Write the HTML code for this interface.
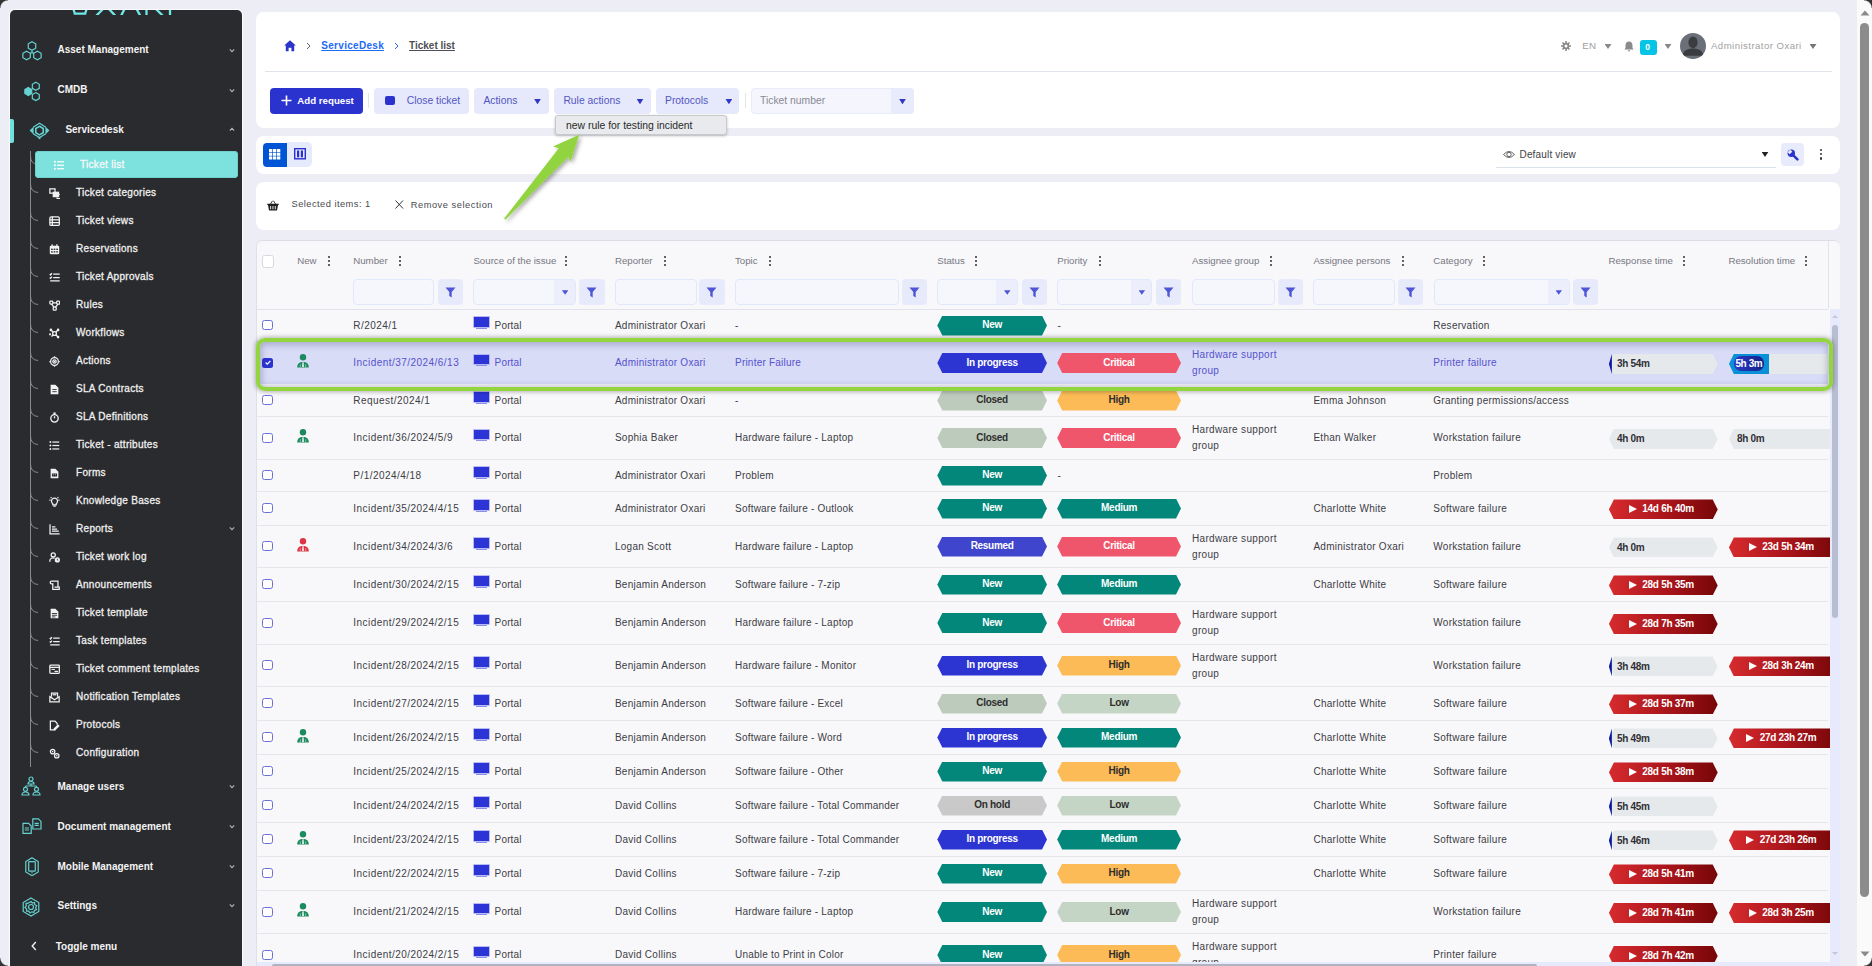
<!DOCTYPE html><html><head><meta charset="utf-8"><style>
*{box-sizing:border-box;margin:0;padding:0}
html,body{width:1872px;height:966px;overflow:hidden;background:#ededf5;font-family:"Liberation Sans", sans-serif;position:relative}
.a{position:absolute}
.t{position:absolute;white-space:nowrap;line-height:1}
</style></head><body><div class="a" style="left:10.0px;top:10.0px;width:232.0px;height:970.0px;background:#2a2b2e;border-radius:5px 5px 0 0;box-shadow:0 0 0 1px #fbfbff"></div>
<svg class="a" style="left:60.0px;top:10.0px;" width="120" height="5" viewBox="0 0 120 5"><g stroke="#6fe8e8" stroke-width="2.3" fill="none">
<path d="M11.5 -8 L14.8 3.7 L25.2 3.7 L28.5 -8"/>
<path d="M35 7 L44 -2"/><path d="M56.5 7 L48 -2"/>
<path d="M60.5 7 L65 -2"/><path d="M81 7 L76 -2"/>
<path d="M86.5 7 V-2"/><path d="M104 7 L95 -2"/><path d="M110 7 V-2"/>
</g></svg>
<svg class="a" style="left:21.0px;top:41.0px;" width="22" height="22" viewBox="0 0 22 22"><g stroke="#64d3d1" stroke-width="1.2" fill="none"><path d="M11.00,0.70 L14.72,2.85 L14.72,7.15 L11.00,9.30 L7.28,7.15 L7.28,2.85 Z"/><path d="M5.60,10.20 L9.32,12.35 L9.32,16.65 L5.60,18.80 L1.88,16.65 L1.88,12.35 Z"/><path d="M16.40,10.20 L20.12,12.35 L20.12,16.65 L16.40,18.80 L12.68,16.65 L12.68,12.35 Z"/><path d="M11 9.3 V11.6 M11 11.6 L9.2 12.3 M11 11.6 L12.8 12.3"/></g></svg>
<svg class="a" style="left:21.0px;top:80.5px;" width="22" height="22" viewBox="0 0 22 22"><g stroke="#64d3d1" stroke-width="1.2" fill="none"><path d="M14.80,1.30 L18.26,3.30 L18.26,7.30 L14.80,9.30 L11.34,7.30 L11.34,3.30 Z"/><path d="M14.80,11.60 L18.26,13.60 L18.26,17.60 L14.80,19.60 L11.34,17.60 L11.34,13.60 Z"/><path d="M7.30,6.50 L10.76,8.50 L10.76,12.50 L7.30,14.50 L3.84,12.50 L3.84,8.50 Z" fill="#64d3d1"/></g></svg>
<svg class="a" style="left:29.0px;top:121.5px;" width="21" height="18" viewBox="0 0 21 18"><g stroke="#64d3d1" stroke-width="1.3" fill="none"><path d="M4.2 5.2 L10.5 1.3 L16.8 5.2"/><path d="M4.2 11.8 L10.5 15.6 L16.8 11.8"/><path d="M10.50,4.30 L14.22,6.45 L14.22,10.75 L10.50,12.90 L6.78,10.75 L6.78,6.45 Z" stroke-width="1.6"/></g><path d="M4.6 4.6 L0.6 8.5 L4.6 12.4 Z" fill="#64d3d1"/><path d="M16.4 4.6 L20.4 8.5 L16.4 12.4 Z" fill="#64d3d1"/><path d="M8 15.3 L10.5 17.3 L13 15.3 L10.5 16 Z" fill="#64d3d1"/></svg>
<div class="a" style="left:10.0px;top:118.5px;width:3.5px;height:24.5px;background:#6fe0dd;border-radius:0 2px 2px 0"></div>
<div class="t" style="left:57.5px;top:45.0px;font-size:10px;color:#f4f4f4;font-weight:bold;">Asset Management</div>
<div class="t" style="left:57.5px;top:85.0px;font-size:10px;color:#f4f4f4;font-weight:bold;">CMDB</div>
<div class="t" style="left:65.4px;top:125.0px;font-size:10px;color:#f4f4f4;font-weight:bold;">Servicedesk</div>
<svg class="a" style="left:229.0px;top:47.5px;" width="6" height="5" viewBox="0 0 6 5"><path d="M0.8 1.4 L3 3.6 L5.2 1.4" stroke="#b4b4b4" stroke-width="1.1" fill="none"/></svg>
<svg class="a" style="left:229.0px;top:87.5px;" width="6" height="5" viewBox="0 0 6 5"><path d="M0.8 1.4 L3 3.6 L5.2 1.4" stroke="#b4b4b4" stroke-width="1.1" fill="none"/></svg>
<svg class="a" style="left:229.0px;top:127.0px;" width="6" height="5" viewBox="0 0 6 5"><path d="M0.8 3.6 L3 1.4 L5.2 3.6" stroke="#b4b4b4" stroke-width="1.1" fill="none"/></svg>
<div class="a" style="left:30.0px;top:151.0px;width:1.0px;height:616.0px;background:#8a8a8a"></div>
<svg class="a" style="left:30.0px;top:155.6px;" width="10" height="10" viewBox="0 0 10 10"><path d="M0.5 0 Q0.5 8 8 8.5" stroke="#8a8a8a" stroke-width="1" fill="none"/></svg>
<div class="a" style="left:35.3px;top:151.2px;width:202.7px;height:27.3px;background:#7de2de;border-radius:4px;box-shadow:inset 0 0 0 1px #70d0cc"></div>
<svg class="a" style="left:53.8px;top:159.8px;" width="10.5" height="10.5" viewBox="0 0 12 12"><g fill="#fff"><rect x="0" y="1" width="2" height="2"/><rect x="0" y="5" width="2" height="2"/><rect x="0" y="9" width="2" height="2"/><rect x="3.5" y="1.3" width="8" height="1.4"/><rect x="3.5" y="5.3" width="8" height="1.4"/><rect x="3.5" y="9.3" width="8" height="1.4"/></g></svg>
<div class="t" style="left:80.0px;top:160.0px;font-size:10px;color:#f8f8f8;letter-spacing:0.3px;-webkit-text-stroke:0.3px #f8f8f8">Ticket list</div>
<svg class="a" style="left:30.0px;top:183.6px;" width="10" height="10" viewBox="0 0 10 10"><path d="M0.5 0 Q0.5 8 8 8.5" stroke="#8a8a8a" stroke-width="1" fill="none"/></svg>
<svg class="a" style="left:48.8px;top:187.7px;" width="11.2" height="11.2" viewBox="-0.4 -0.4 13 13"><g stroke="#f2f2f2" stroke-width="1.45" fill="none"><rect x="0.6" y="0.6" width="6" height="5"/><rect x="4.6" y="4.6" width="6" height="5" fill="#f2f2f2"/><path d="M9 10.5 V12 H13 V7 H11.5"/></g></svg>
<div class="t" style="left:76.0px;top:188.0px;font-size:10px;color:#efefef;letter-spacing:0.3px;-webkit-text-stroke:0.3px #efefef">Ticket categories</div>
<svg class="a" style="left:30.0px;top:211.6px;" width="10" height="10" viewBox="0 0 10 10"><path d="M0.5 0 Q0.5 8 8 8.5" stroke="#8a8a8a" stroke-width="1" fill="none"/></svg>
<svg class="a" style="left:48.8px;top:215.7px;" width="11.2" height="11.2" viewBox="-0.4 -0.4 13 13"><g stroke="#f2f2f2" stroke-width="1.45" fill="none"><rect x="0.6" y="0.6" width="11" height="10" rx="1.5"/><path d="M0.6 4 H11.6 M0.6 7.3 H11.6 M3.5 0.6 V10.6"/></g></svg>
<div class="t" style="left:76.0px;top:216.0px;font-size:10px;color:#efefef;letter-spacing:0.3px;-webkit-text-stroke:0.3px #efefef">Ticket views</div>
<svg class="a" style="left:30.0px;top:239.6px;" width="10" height="10" viewBox="0 0 10 10"><path d="M0.5 0 Q0.5 8 8 8.5" stroke="#8a8a8a" stroke-width="1" fill="none"/></svg>
<svg class="a" style="left:48.8px;top:243.7px;" width="11.2" height="11.2" viewBox="-0.4 -0.4 13 13"><g fill="#f2f2f2"><rect x="0.5" y="1.5" width="11" height="10" rx="1.5"/><rect x="2.5" y="0" width="1.5" height="3"/><rect x="8" y="0" width="1.5" height="3"/></g><g fill="#2a2b2e"><rect x="2" y="5" width="2" height="1.5"/><rect x="5" y="5" width="2" height="1.5"/><rect x="8" y="5" width="2" height="1.5"/><rect x="2" y="8" width="2" height="1.5"/><rect x="5" y="8" width="2" height="1.5"/><rect x="8" y="8" width="2" height="1.5"/></g></svg>
<div class="t" style="left:76.0px;top:244.0px;font-size:10px;color:#efefef;letter-spacing:0.3px;-webkit-text-stroke:0.3px #efefef">Reservations</div>
<svg class="a" style="left:30.0px;top:267.6px;" width="10" height="10" viewBox="0 0 10 10"><path d="M0.5 0 Q0.5 8 8 8.5" stroke="#8a8a8a" stroke-width="1" fill="none"/></svg>
<svg class="a" style="left:48.8px;top:271.7px;" width="11.2" height="11.2" viewBox="-0.4 -0.4 13 13"><g stroke="#f2f2f2" stroke-width="1.45" fill="none"><path d="M0.5 2 L1.5 3 L3 1 M0.5 6 L1.5 7 L3 5"/><path d="M4.5 2.2 H12 M4.5 6.2 H12 M1 10 H12"/></g></svg>
<div class="t" style="left:76.0px;top:272.0px;font-size:10px;color:#efefef;letter-spacing:0.3px;-webkit-text-stroke:0.3px #efefef">Ticket Approvals</div>
<svg class="a" style="left:30.0px;top:295.6px;" width="10" height="10" viewBox="0 0 10 10"><path d="M0.5 0 Q0.5 8 8 8.5" stroke="#8a8a8a" stroke-width="1" fill="none"/></svg>
<svg class="a" style="left:48.8px;top:299.7px;" width="11.2" height="11.2" viewBox="-0.4 -0.4 13 13"><g stroke="#f2f2f2" stroke-width="1.45" fill="none"><rect x="0.6" y="1" width="3.5" height="3.5" rx="1"/><rect x="8.5" y="1" width="3.5" height="3.5" rx="1"/><rect x="4.5" y="8" width="3.5" height="3.5" rx="1"/><path d="M4 2.8 H8.5 M2.5 4.5 L5.5 8 M10 4.5 L7 8"/></g></svg>
<div class="t" style="left:76.0px;top:300.0px;font-size:10px;color:#efefef;letter-spacing:0.3px;-webkit-text-stroke:0.3px #efefef">Rules</div>
<svg class="a" style="left:30.0px;top:323.6px;" width="10" height="10" viewBox="0 0 10 10"><path d="M0.5 0 Q0.5 8 8 8.5" stroke="#8a8a8a" stroke-width="1" fill="none"/></svg>
<svg class="a" style="left:48.8px;top:327.7px;" width="11.2" height="11.2" viewBox="-0.4 -0.4 13 13"><g stroke="#f2f2f2" stroke-width="1.55" fill="none"><circle cx="6" cy="6" r="2.2"/><path d="M4.5 4.5 L2 2 M7.5 4.5 L10 2 M4.5 7.5 L2.5 9.5 M7.5 7.5 L10 10"/></g><g fill="#f2f2f2"><circle cx="1.8" cy="1.8" r="1.5"/><circle cx="10.2" cy="1.8" r="1.5"/><circle cx="10.2" cy="10.2" r="1.5"/><circle cx="0.8" cy="7" r="1.2"/></g></svg>
<div class="t" style="left:76.0px;top:328.0px;font-size:10px;color:#efefef;letter-spacing:0.3px;-webkit-text-stroke:0.3px #efefef">Workflows</div>
<svg class="a" style="left:30.0px;top:351.6px;" width="10" height="10" viewBox="0 0 10 10"><path d="M0.5 0 Q0.5 8 8 8.5" stroke="#8a8a8a" stroke-width="1" fill="none"/></svg>
<svg class="a" style="left:48.8px;top:355.7px;" width="11.2" height="11.2" viewBox="-0.4 -0.4 13 13"><g stroke="#f2f2f2" stroke-width="1.45" fill="none"><circle cx="6" cy="6" r="4.5"/><circle cx="6" cy="6" r="2"/><path d="M6 0 V1.5 M6 10.5 V12 M0 6 H1.5 M10.5 6 H12"/></g><circle cx="6" cy="6" r="1" fill="#f2f2f2"/></svg>
<div class="t" style="left:76.0px;top:356.0px;font-size:10px;color:#efefef;letter-spacing:0.3px;-webkit-text-stroke:0.3px #efefef">Actions</div>
<svg class="a" style="left:30.0px;top:379.6px;" width="10" height="10" viewBox="0 0 10 10"><path d="M0.5 0 Q0.5 8 8 8.5" stroke="#8a8a8a" stroke-width="1" fill="none"/></svg>
<svg class="a" style="left:48.8px;top:383.7px;" width="11.2" height="11.2" viewBox="-0.4 -0.4 13 13"><g fill="#f2f2f2"><path d="M1.5 0.5 H7 L10.5 4 V11.5 H1.5 Z"/></g><g stroke="#2a2b2e" stroke-width="1"><path d="M3.5 6 H8.5 M3.5 8.5 H8.5"/></g></svg>
<div class="t" style="left:76.0px;top:384.0px;font-size:10px;color:#efefef;letter-spacing:0.3px;-webkit-text-stroke:0.3px #efefef">SLA Contracts</div>
<svg class="a" style="left:30.0px;top:407.6px;" width="10" height="10" viewBox="0 0 10 10"><path d="M0.5 0 Q0.5 8 8 8.5" stroke="#8a8a8a" stroke-width="1" fill="none"/></svg>
<svg class="a" style="left:48.8px;top:411.7px;" width="11.2" height="11.2" viewBox="-0.4 -0.4 13 13"><g stroke="#f2f2f2" stroke-width="1.55" fill="none"><circle cx="6" cy="7" r="4.3"/><path d="M6 7 V4.5 M4.5 1 H7.5 M6 1 V2.5"/></g></svg>
<div class="t" style="left:76.0px;top:412.0px;font-size:10px;color:#efefef;letter-spacing:0.3px;-webkit-text-stroke:0.3px #efefef">SLA Definitions</div>
<svg class="a" style="left:30.0px;top:435.6px;" width="10" height="10" viewBox="0 0 10 10"><path d="M0.5 0 Q0.5 8 8 8.5" stroke="#8a8a8a" stroke-width="1" fill="none"/></svg>
<svg class="a" style="left:48.8px;top:439.7px;" width="11.2" height="11.2" viewBox="-0.4 -0.4 13 13"><g fill="#f2f2f2"><circle cx="1.2" cy="2" r="1.1"/><circle cx="1.2" cy="6" r="1.1"/><circle cx="1.2" cy="10" r="1.1"/><rect x="3.5" y="1.3" width="8" height="1.4"/><rect x="3.5" y="5.3" width="8" height="1.4"/><rect x="3.5" y="9.3" width="8" height="1.4"/></g></svg>
<div class="t" style="left:76.0px;top:440.0px;font-size:10px;color:#efefef;letter-spacing:0.3px;-webkit-text-stroke:0.3px #efefef">Ticket - attributes</div>
<svg class="a" style="left:30.0px;top:463.6px;" width="10" height="10" viewBox="0 0 10 10"><path d="M0.5 0 Q0.5 8 8 8.5" stroke="#8a8a8a" stroke-width="1" fill="none"/></svg>
<svg class="a" style="left:48.8px;top:467.7px;" width="11.2" height="11.2" viewBox="-0.4 -0.4 13 13"><g fill="#f2f2f2"><path d="M1.5 0.5 H7 L10.5 4 V11.5 H1.5 Z"/></g><g fill="#2a2b2e"><rect x="3" y="6" width="6" height="3.5"/></g><g fill="#f2f2f2"><rect x="4" y="7" width="1" height="1"/><rect x="6.5" y="7" width="1" height="1"/></g></svg>
<div class="t" style="left:76.0px;top:468.0px;font-size:10px;color:#efefef;letter-spacing:0.3px;-webkit-text-stroke:0.3px #efefef">Forms</div>
<svg class="a" style="left:30.0px;top:491.6px;" width="10" height="10" viewBox="0 0 10 10"><path d="M0.5 0 Q0.5 8 8 8.5" stroke="#8a8a8a" stroke-width="1" fill="none"/></svg>
<svg class="a" style="left:48.8px;top:495.7px;" width="11.2" height="11.2" viewBox="-0.4 -0.4 13 13"><g stroke="#f2f2f2" stroke-width="1.45" fill="none"><path d="M4 8.5 A3.5 3.5 0 1 1 8 8.5 V10 H4 Z"/><path d="M4.5 11.5 H7.5 M0 4.5 H1.5 M10.5 4.5 H12 M1.5 1 L2.5 2 M10.5 1 L9.5 2"/></g></svg>
<div class="t" style="left:76.0px;top:496.0px;font-size:10px;color:#efefef;letter-spacing:0.3px;-webkit-text-stroke:0.3px #efefef">Knowledge Bases</div>
<svg class="a" style="left:30.0px;top:519.6px;" width="10" height="10" viewBox="0 0 10 10"><path d="M0.5 0 Q0.5 8 8 8.5" stroke="#8a8a8a" stroke-width="1" fill="none"/></svg>
<svg class="a" style="left:48.8px;top:523.7px;" width="11.2" height="11.2" viewBox="-0.4 -0.4 13 13"><g stroke="#f2f2f2" stroke-width="1.45" fill="none"><path d="M0.8 0 V11.2 H12"/><path d="M3 3 H7 M3 5.5 H9 M3 8 H11"/></g></svg>
<div class="t" style="left:76.0px;top:524.0px;font-size:10px;color:#efefef;letter-spacing:0.3px;-webkit-text-stroke:0.3px #efefef">Reports</div>
<svg class="a" style="left:30.0px;top:547.6px;" width="10" height="10" viewBox="0 0 10 10"><path d="M0.5 0 Q0.5 8 8 8.5" stroke="#8a8a8a" stroke-width="1" fill="none"/></svg>
<svg class="a" style="left:48.8px;top:551.7px;" width="11.2" height="11.2" viewBox="-0.4 -0.4 13 13"><g stroke="#f2f2f2" stroke-width="1.45" fill="none"><circle cx="4.5" cy="3" r="2.4"/><path d="M0.6 11 V9.5 A3.5 3 0 0 1 6 7"/></g><circle cx="9.3" cy="8.8" r="3" fill="#f2f2f2"/><path d="M9.3 7.3 V9 H10.5" stroke="#2a2b2e" stroke-width="0.8" fill="none"/></svg>
<div class="t" style="left:76.0px;top:552.0px;font-size:10px;color:#efefef;letter-spacing:0.3px;-webkit-text-stroke:0.3px #efefef">Ticket work log</div>
<svg class="a" style="left:30.0px;top:575.6px;" width="10" height="10" viewBox="0 0 10 10"><path d="M0.5 0 Q0.5 8 8 8.5" stroke="#8a8a8a" stroke-width="1" fill="none"/></svg>
<svg class="a" style="left:48.8px;top:579.7px;" width="11.2" height="11.2" viewBox="-0.4 -0.4 13 13"><g stroke="#f2f2f2" stroke-width="1.45" fill="none"><path d="M2.5 1 H10 V8 M2.5 1 A1.5 1.5 0 0 0 2.5 4 H4 V10.5 H11.5 V8 H6"/></g></svg>
<div class="t" style="left:76.0px;top:580.0px;font-size:10px;color:#efefef;letter-spacing:0.3px;-webkit-text-stroke:0.3px #efefef">Announcements</div>
<svg class="a" style="left:30.0px;top:603.6px;" width="10" height="10" viewBox="0 0 10 10"><path d="M0.5 0 Q0.5 8 8 8.5" stroke="#8a8a8a" stroke-width="1" fill="none"/></svg>
<svg class="a" style="left:48.8px;top:607.7px;" width="11.2" height="11.2" viewBox="-0.4 -0.4 13 13"><g fill="#f2f2f2"><path d="M1.5 0.5 H7 L10.5 4 V11.5 H1.5 Z"/></g><g fill="#2a2b2e"><rect x="3" y="5.5" width="6" height="1"/><rect x="3" y="7.5" width="6" height="1"/><rect x="3" y="9.5" width="4" height="1"/></g></svg>
<div class="t" style="left:76.0px;top:608.0px;font-size:10px;color:#efefef;letter-spacing:0.3px;-webkit-text-stroke:0.3px #efefef">Ticket template</div>
<svg class="a" style="left:30.0px;top:631.6px;" width="10" height="10" viewBox="0 0 10 10"><path d="M0.5 0 Q0.5 8 8 8.5" stroke="#8a8a8a" stroke-width="1" fill="none"/></svg>
<svg class="a" style="left:48.8px;top:635.7px;" width="11.2" height="11.2" viewBox="-0.4 -0.4 13 13"><g stroke="#f2f2f2" stroke-width="1.45" fill="none"><path d="M0.5 2 L1.5 3 L3 1 M0.5 6 L1.5 7 L3 5"/><path d="M4.5 2.2 H12 M4.5 6.2 H12 M1 10 H12"/></g></svg>
<div class="t" style="left:76.0px;top:636.0px;font-size:10px;color:#efefef;letter-spacing:0.3px;-webkit-text-stroke:0.3px #efefef">Task templates</div>
<svg class="a" style="left:30.0px;top:659.6px;" width="10" height="10" viewBox="0 0 10 10"><path d="M0.5 0 Q0.5 8 8 8.5" stroke="#8a8a8a" stroke-width="1" fill="none"/></svg>
<svg class="a" style="left:48.8px;top:663.7px;" width="11.2" height="11.2" viewBox="-0.4 -0.4 13 13"><g stroke="#f2f2f2" stroke-width="1.45" fill="none"><rect x="0.6" y="1" width="11" height="9.5" rx="1"/><path d="M0.6 3.5 H11.6"/></g><g fill="#f2f2f2"><rect x="2.5" y="5.3" width="4" height="1.2"/><rect x="6" y="7.5" width="4" height="1.5"/></g></svg>
<div class="t" style="left:76.0px;top:664.0px;font-size:10px;color:#efefef;letter-spacing:0.3px;-webkit-text-stroke:0.3px #efefef">Ticket comment templates</div>
<svg class="a" style="left:30.0px;top:687.6px;" width="10" height="10" viewBox="0 0 10 10"><path d="M0.5 0 Q0.5 8 8 8.5" stroke="#8a8a8a" stroke-width="1" fill="none"/></svg>
<svg class="a" style="left:48.8px;top:691.7px;" width="11.2" height="11.2" viewBox="-0.4 -0.4 13 13"><g stroke="#f2f2f2" stroke-width="1.45" fill="none"><path d="M2.5 5 V0.8 H9.5 V5"/><path d="M0.6 5 L6 8.5 L11.4 5 V11 H0.6 Z"/><path d="M4 2.8 H8"/></g></svg>
<div class="t" style="left:76.0px;top:692.0px;font-size:10px;color:#efefef;letter-spacing:0.3px;-webkit-text-stroke:0.3px #efefef">Notification Templates</div>
<svg class="a" style="left:30.0px;top:715.6px;" width="10" height="10" viewBox="0 0 10 10"><path d="M0.5 0 Q0.5 8 8 8.5" stroke="#8a8a8a" stroke-width="1" fill="none"/></svg>
<svg class="a" style="left:48.8px;top:719.7px;" width="11.2" height="11.2" viewBox="-0.4 -0.4 13 13"><g stroke="#f2f2f2" stroke-width="1.45" fill="none"><path d="M7 11 H1.2 V0.8 H6.5 L9 3.3 V5"/></g><path d="M5 9.5 L10 4.5 L12 6.5 L7 11.5 L5 11.5 Z" fill="#f2f2f2"/></svg>
<div class="t" style="left:76.0px;top:720.0px;font-size:10px;color:#efefef;letter-spacing:0.3px;-webkit-text-stroke:0.3px #efefef">Protocols</div>
<svg class="a" style="left:30.0px;top:743.6px;" width="10" height="10" viewBox="0 0 10 10"><path d="M0.5 0 Q0.5 8 8 8.5" stroke="#8a8a8a" stroke-width="1" fill="none"/></svg>
<svg class="a" style="left:48.8px;top:747.7px;" width="11.2" height="11.2" viewBox="-0.4 -0.4 13 13"><g stroke="#f2f2f2" stroke-width="1.45" fill="none"><circle cx="3.8" cy="3.8" r="2.6"/><circle cx="8.6" cy="8.6" r="2.6"/></g><g fill="#f2f2f2"><circle cx="3.8" cy="3.8" r="0.9"/><circle cx="8.6" cy="8.6" r="0.9"/></g></svg>
<div class="t" style="left:76.0px;top:748.0px;font-size:10px;color:#efefef;letter-spacing:0.3px;-webkit-text-stroke:0.3px #efefef">Configuration</div>
<svg class="a" style="left:229.0px;top:526.0px;" width="6" height="5" viewBox="0 0 6 5"><path d="M0.8 1.4 L3 3.6 L5.2 1.4" stroke="#b4b4b4" stroke-width="1.1" fill="none"/></svg>
<svg class="a" style="left:21.0px;top:776.0px;" width="20" height="20" viewBox="0 0 20 20"><g stroke="#64d3d1" stroke-width="1.2" fill="none"><circle cx="10" cy="3" r="2"/><path d="M7 8 A3 2.5 0 0 1 13 8 Z"/><path d="M10 8 V10 M4.5 10 H15.5 M4.5 10 V11 M15.5 10 V11"/><circle cx="4.5" cy="13.3" r="2"/><path d="M1 19 A3.5 3 0 0 1 8 19 Z"/><circle cx="15.5" cy="13.3" r="2"/><path d="M12 19 A3.5 3 0 0 1 19 19 Z"/></g></svg>
<svg class="a" style="left:21.5px;top:818.0px;" width="20" height="16.5" viewBox="0 0 20 16.5"><g stroke="#64d3d1" stroke-width="1.2" fill="none"><path d="M1 5.4 H6.6 L9.2 8 V15.4 H1 Z"/><path d="M10.8 0.8 H16.4 L19 3.4 V11 H10.8 Z"/><path d="M2.8 10 H7 M2.8 12 H7 M12.6 5.4 H16.8 M12.6 7.4 H16.8"/></g></svg>
<svg class="a" style="left:24.5px;top:856.5px;" width="14" height="19.5" viewBox="0 0 14 19.5"><g stroke="#64d3d1" stroke-width="1.2" fill="none"><path d="M7 0.8 L13.2 4.6 V14.9 L7 18.7 L0.8 14.9 V4.6 Z"/><rect x="3.7" y="4.6" width="6.6" height="9.6" rx="0.8"/></g><circle cx="7" cy="15.8" r="0.7" fill="#64d3d1"/></svg>
<svg class="a" style="left:21.0px;top:896.5px;" width="20" height="20" viewBox="0 0 20 20"><g stroke="#64d3d1" stroke-width="1.2" fill="none"><path d="M10.00,1.00 L17.79,5.50 L17.79,14.50 L10.00,19.00 L2.21,14.50 L2.21,5.50 Z"/><circle cx="10" cy="10" r="2.5"/><path d="M10 4.5 L11.3 6 L13.5 5.5 L13.8 7.7 L15.7 8.8 L14.6 10.7 L15.5 12.6 L13.4 13.4 L12.8 15.5 L10.8 14.8 L9 16 L7.8 14.2 L5.6 14.2 L5.6 12 L4 10.5 L5.3 8.8 L5 6.6 L7.1 6.2 Z"/></g></svg>
<div class="t" style="left:57.5px;top:782.0px;font-size:10px;color:#f4f4f4;font-weight:bold;">Manage users</div>
<svg class="a" style="left:229.0px;top:783.8px;" width="6" height="5" viewBox="0 0 6 5"><path d="M0.8 1.4 L3 3.6 L5.2 1.4" stroke="#b4b4b4" stroke-width="1.1" fill="none"/></svg>
<div class="t" style="left:57.5px;top:822.0px;font-size:10px;color:#f4f4f4;font-weight:bold;">Document management</div>
<svg class="a" style="left:229.0px;top:823.6px;" width="6" height="5" viewBox="0 0 6 5"><path d="M0.8 1.4 L3 3.6 L5.2 1.4" stroke="#b4b4b4" stroke-width="1.1" fill="none"/></svg>
<div class="t" style="left:57.5px;top:862.0px;font-size:10px;color:#f4f4f4;font-weight:bold;">Mobile Management</div>
<svg class="a" style="left:229.0px;top:863.6px;" width="6" height="5" viewBox="0 0 6 5"><path d="M0.8 1.4 L3 3.6 L5.2 1.4" stroke="#b4b4b4" stroke-width="1.1" fill="none"/></svg>
<div class="t" style="left:57.5px;top:901.0px;font-size:10px;color:#f4f4f4;font-weight:bold;">Settings</div>
<svg class="a" style="left:229.0px;top:903.4px;" width="6" height="5" viewBox="0 0 6 5"><path d="M0.8 1.4 L3 3.6 L5.2 1.4" stroke="#b4b4b4" stroke-width="1.1" fill="none"/></svg>
<svg class="a" style="left:31.0px;top:941.0px;" width="6" height="10" viewBox="0 0 6 10"><path d="M4.8 1 L1.2 5 L4.8 9" stroke="#f0f0f0" stroke-width="1.4" fill="none"/></svg>
<div class="t" style="left:55.7px;top:942.0px;font-size:10px;color:#f4f4f4;font-weight:bold;">Toggle menu</div>
<div class="a" style="left:256.0px;top:12.0px;width:1584.0px;height:116.0px;background:#fff;border-radius:8px"></div>
<svg class="a" style="left:283.5px;top:40.0px;" width="12" height="11.5" viewBox="0 0 12 11.5"><path d="M6 0.3 L11.8 5.6 H10.2 V11.3 H7.4 V7.8 H4.6 V11.3 H1.8 V5.6 H0.2 Z" fill="#2b34c9"/></svg>
<svg class="a" style="left:306.0px;top:41.5px;" width="5" height="8" viewBox="0 0 5 8"><path d="M1 1 L4 4 L1 7" stroke="#666" stroke-width="1" fill="none"/></svg>
<div class="t" style="left:321.3px;top:41.0px;font-size:10px;color:#1d6af5;font-weight:bold;letter-spacing:0.29px;text-decoration:underline;text-underline-offset:1px;text-decoration-thickness:1px">ServiceDesk</div>
<svg class="a" style="left:394.0px;top:41.5px;" width="5" height="8" viewBox="0 0 5 8"><path d="M1 1 L4 4 L1 7" stroke="#2f6ad8" stroke-width="1" fill="none"/></svg>
<div class="t" style="left:409.0px;top:41.0px;font-size:10px;color:#4e4e54;font-weight:bold;text-decoration:underline;text-underline-offset:1px;text-decoration-thickness:1px">Ticket list</div>
<div class="a" style="left:265.0px;top:71.0px;width:1567.0px;height:1.0px;background:#dfe3ea"></div>
<svg class="a" style="left:1561.0px;top:41.0px;" width="10" height="10" viewBox="0 0 10 10"><g fill="#8a8a8a"><circle cx="5" cy="5" r="3.3"/></g><circle cx="5" cy="5" r="1.5" fill="#fff"/><g stroke="#8a8a8a" stroke-width="1.6"><path d="M5 0 V10 M0 5 H10 M1.5 1.5 L8.5 8.5 M8.5 1.5 L1.5 8.5"/></g><circle cx="5" cy="5" r="1.5" fill="#fff"/></svg>
<div class="t" style="left:1582.3px;top:41.0px;font-size:9.8px;color:#a0a0a0;letter-spacing:0.2px">EN</div>
<div class="a" style="left:1604.5px;top:44.0px;width:7.0px;height:5.0px;background:#888;clip-path:polygon(0 0,100% 0,50% 100%)"></div>
<svg class="a" style="left:1623.5px;top:40.5px;" width="10" height="11" viewBox="0 0 10 11"><path d="M5 0.5 C2.5 0.5 1.5 2.5 1.5 4.5 V7 L0.3 8.5 H9.7 L8.5 7 V4.5 C8.5 2.5 7.5 0.5 5 0.5 Z M3.8 9.3 A1.2 1.2 0 0 0 6.2 9.3 Z" fill="#8a8a8a"/></svg>
<div class="a" style="left:1640.0px;top:40.0px;width:16.5px;height:14.5px;background:#06c4e6;border-radius:3px"></div>
<div class="t" style="left:1645.3px;top:43.0px;font-size:8.5px;color:#fff;font-weight:bold;">0</div>
<div class="a" style="left:1664.5px;top:44.0px;width:7.0px;height:5.0px;background:#888;clip-path:polygon(0 0,100% 0,50% 100%)"></div>
<svg class="a" style="left:1680.0px;top:33.0px;" width="26" height="26" viewBox="0 0 26 26"><defs><clipPath id="av"><circle cx="13" cy="13" r="13"/></clipPath></defs><circle cx="13" cy="13" r="13" fill="#6b7078"/><g clip-path="url(#av)" fill="#3a3c40"><ellipse cx="13" cy="9.3" rx="4.6" ry="5.9"/><path d="M2.5 22.8 C3 17.8 7.5 15.6 13 15.6 C18.5 15.6 23 17.8 23.5 22.8 Z"/></g></svg>
<div class="t" style="left:1711.0px;top:41.0px;font-size:9.6px;color:#a2a2a2;letter-spacing:0.45px">Administrator Oxari</div>
<div class="a" style="left:1809.5px;top:44.0px;width:7.0px;height:5.0px;background:#777;clip-path:polygon(0 0,100% 0,50% 100%)"></div>
<div class="a" style="left:270.0px;top:88.0px;width:93.0px;height:26.0px;background:#2b33cf;border-radius:4px"></div>
<svg class="a" style="left:280.5px;top:95.0px;" width="11" height="11" viewBox="0 0 11 11"><path d="M5.5 0.5 V10.5 M0.5 5.5 H10.5" stroke="#fff" stroke-width="1.6"/></svg>
<div class="t" style="left:297.3px;top:96.0px;font-size:9.7px;color:#fff;font-weight:bold;">Add request</div>
<div class="a" style="left:368.0px;top:93.0px;width:1.0px;height:15.0px;background:#e2e4ea"></div>
<div class="a" style="left:374.2px;top:88.0px;width:94.6px;height:26.0px;background:#e6e9fb;border-radius:4px"></div>
<div class="t" style="left:406.7px;top:96.0px;font-size:10.35px;color:#5356c2;">Close ticket</div>
<div class="a" style="left:384.8px;top:95.8px;width:9.8px;height:9.2px;background:#2b33cf;border-radius:2px"></div>
<div class="a" style="left:474.0px;top:88.0px;width:74.8px;height:26.0px;background:#e6e9fb;border-radius:4px"></div>
<div class="t" style="left:483.4px;top:96.0px;font-size:10.35px;color:#5356c2;">Actions</div>
<div class="a" style="left:534.0px;top:98.8px;width:7.0px;height:5.4px;background:#2f37c6;clip-path:polygon(0 0,100% 0,50% 100%)"></div>
<div class="a" style="left:554.3px;top:88.0px;width:96.4px;height:26.0px;background:#e6e9fb;border-radius:4px"></div>
<div class="t" style="left:563.4px;top:96.0px;font-size:10.35px;color:#5356c2;">Rule actions</div>
<div class="a" style="left:636.5px;top:98.8px;width:7.0px;height:5.4px;background:#2f37c6;clip-path:polygon(0 0,100% 0,50% 100%)"></div>
<div class="a" style="left:656.4px;top:88.0px;width:83.1px;height:26.0px;background:#e6e9fb;border-radius:4px"></div>
<div class="t" style="left:665.0px;top:96.0px;font-size:10.35px;color:#5356c2;">Protocols</div>
<div class="a" style="left:725.4px;top:98.8px;width:7.0px;height:5.4px;background:#2f37c6;clip-path:polygon(0 0,100% 0,50% 100%)"></div>
<div class="a" style="left:744.5px;top:93.0px;width:1.0px;height:15.0px;background:#e2e4ea"></div>
<div class="a" style="left:751.0px;top:88.0px;width:163.0px;height:26.0px;background:#f4f5fd;border:1px solid #e8ebf8;border-radius:4px"></div>
<div class="a" style="left:891.0px;top:88.0px;width:23.0px;height:26.0px;background:#e8ebfb;border-radius:0 4px 4px 0"></div>
<div class="t" style="left:760.0px;top:96.0px;font-size:10.35px;color:#8a8a92;">Ticket number</div>
<div class="a" style="left:899.0px;top:98.8px;width:7.0px;height:5.4px;background:#2f37c6;clip-path:polygon(0 0,100% 0,50% 100%)"></div>
<div class="a" style="left:256.0px;top:136.0px;width:1584.0px;height:38.0px;background:#fff;border-radius:8px"></div>
<div class="a" style="left:263.0px;top:142.7px;width:24.0px;height:24.1px;background:#0055d4;border-radius:4px 0 0 4px"></div>
<div class="a" style="left:287.0px;top:142.2px;width:25.0px;height:25.3px;background:#e5eafc;border-radius:0 5px 5px 0"></div>
<svg class="a" style="left:269.0px;top:149.0px;" width="12" height="11" viewBox="0 0 12 11"><g fill="#fff"><rect x="0" y="0.0" width="3.3" height="3.1"/><rect x="4" y="0.0" width="3.3" height="3.1"/><rect x="8" y="0.0" width="3.3" height="3.1"/><rect x="0" y="3.7" width="3.3" height="3.1"/><rect x="4" y="3.7" width="3.3" height="3.1"/><rect x="8" y="3.7" width="3.3" height="3.1"/><rect x="0" y="7.4" width="3.3" height="3.1"/><rect x="4" y="7.4" width="3.3" height="3.1"/><rect x="8" y="7.4" width="3.3" height="3.1"/></g></svg>
<svg class="a" style="left:294.0px;top:148.4px;" width="12" height="11.5" viewBox="0 0 12 11.5"><rect x="0.7" y="0.7" width="10.6" height="10.1" stroke="#2a2fd0" stroke-width="1.4" fill="none"/><rect x="3" y="2.5" width="2.2" height="6.8" fill="#2a2fd0"/><rect x="6.8" y="2.5" width="2.2" height="6.8" fill="#2a2fd0"/></svg>
<svg class="a" style="left:1503.0px;top:150.0px;" width="12" height="9" viewBox="0 0 12 9"><g stroke="#555" stroke-width="0.9" fill="none"><path d="M0.5 4.5 Q6 -1.5 11.5 4.5 Q6 10.5 0.5 4.5 Z"/><circle cx="6" cy="4.5" r="2.2"/></g></svg>
<div class="t" style="left:1519.5px;top:150.0px;font-size:10px;color:#3e3e44;letter-spacing:0.17px">Default view</div>
<div class="a" style="left:1495.8px;top:166.5px;width:280.0px;height:1.0px;background:#dbe2ea"></div>
<div class="a" style="left:1761.5px;top:151.8px;width:7.0px;height:5.2px;background:#222;clip-path:polygon(0 0,100% 0,50% 100%)"></div>
<div class="a" style="left:1781.0px;top:143.2px;width:22.7px;height:23.2px;background:#e7ebfc;border-radius:4px"></div>
<svg class="a" style="left:1786.5px;top:148.5px;" width="12" height="12" viewBox="0 0 12 12"><circle cx="4.3" cy="4.3" r="3.7" fill="#2b34c9"/><path d="M4.6 4.6 L10.4 10.4" stroke="#2b34c9" stroke-width="2.5" stroke-linecap="round"/><path d="M0.6 3.2 L3.2 0.6 L5.3 2.7 L2.7 5.3 Z" fill="#e7ebfc"/></svg>
<div class="a" style="left:1820.2px;top:148.6px;width:2.2px;height:2.2px;background:#333;border-radius:50%"></div>
<div class="a" style="left:1820.2px;top:153.0px;width:2.2px;height:2.2px;background:#333;border-radius:50%"></div>
<div class="a" style="left:1820.2px;top:157.4px;width:2.2px;height:2.2px;background:#333;border-radius:50%"></div>
<div class="a" style="left:256.0px;top:181.6px;width:1584.0px;height:48.4px;background:#fff;border-radius:8px"></div>
<svg class="a" style="left:267.3px;top:199.5px;" width="12" height="11" viewBox="0 0 12 11"><path d="M3.5 4 L5.5 0.8 M8.5 4 L6.5 0.8" stroke="#222" stroke-width="0.9" fill="none"/><path d="M0.3 3.8 H11.7 V5 H11 L10 10.5 H2 L1 5 H0.3 Z" fill="#1e1e1e"/><g fill="#fff"><rect x="3.2" y="6" width="0.9" height="3.3"/><rect x="5.5" y="6" width="0.9" height="3.3"/><rect x="7.8" y="6" width="0.9" height="3.3"/></g></svg>
<div class="t" style="left:291.5px;top:200.0px;font-size:9.3px;color:#4a4a50;letter-spacing:0.46px">Selected items: 1</div>
<svg class="a" style="left:395.0px;top:200.0px;" width="8.5" height="9" viewBox="0 0 8.5 9"><path d="M0.5 0.5 L8 8.5 M8 0.5 L0.5 8.5" stroke="#333" stroke-width="1"/></svg>
<div class="t" style="left:410.7px;top:201.0px;font-size:9.3px;color:#4a4a50;letter-spacing:0.53px">Remove selection</div>
<div class="a" style="left:256.0px;top:240.0px;width:1584.0px;height:740.0px;background:#f8f8fb;border-radius:6px 6px 0 0;border-left:1px solid #e0e1e8;border-top:1px solid #dcdde4"></div>
<div class="a" style="left:1828.0px;top:241.0px;width:1.0px;height:68.0px;background:#e2e3ea"></div>
<div class="a" style="left:262.0px;top:255.0px;width:11.5px;height:13.0px;background:#fff;border:1px solid #d8d8e0;border-radius:2.5px"></div>
<div class="t" style="left:297.2px;top:256.0px;font-size:9.7px;color:#77777f;">New</div>
<div class="a" style="left:327.5px;top:255.8px;width:2.1px;height:2.1px;background:#444;border-radius:35%"></div>
<div class="a" style="left:327.5px;top:259.8px;width:2.1px;height:2.1px;background:#444;border-radius:35%"></div>
<div class="a" style="left:327.5px;top:263.7px;width:2.1px;height:2.1px;background:#444;border-radius:35%"></div>
<div class="t" style="left:353.2px;top:256.0px;font-size:9.7px;color:#77777f;">Number</div>
<div class="a" style="left:398.6px;top:255.8px;width:2.1px;height:2.1px;background:#444;border-radius:35%"></div>
<div class="a" style="left:398.6px;top:259.8px;width:2.1px;height:2.1px;background:#444;border-radius:35%"></div>
<div class="a" style="left:398.6px;top:263.7px;width:2.1px;height:2.1px;background:#444;border-radius:35%"></div>
<div class="t" style="left:473.4px;top:256.0px;font-size:9.7px;color:#77777f;">Source of the issue</div>
<div class="a" style="left:565.3px;top:255.8px;width:2.1px;height:2.1px;background:#444;border-radius:35%"></div>
<div class="a" style="left:565.3px;top:259.8px;width:2.1px;height:2.1px;background:#444;border-radius:35%"></div>
<div class="a" style="left:565.3px;top:263.7px;width:2.1px;height:2.1px;background:#444;border-radius:35%"></div>
<div class="t" style="left:614.9px;top:256.0px;font-size:9.7px;color:#77777f;">Reporter</div>
<div class="a" style="left:663.7px;top:255.8px;width:2.1px;height:2.1px;background:#444;border-radius:35%"></div>
<div class="a" style="left:663.7px;top:259.8px;width:2.1px;height:2.1px;background:#444;border-radius:35%"></div>
<div class="a" style="left:663.7px;top:263.7px;width:2.1px;height:2.1px;background:#444;border-radius:35%"></div>
<div class="t" style="left:735.0px;top:256.0px;font-size:9.7px;color:#77777f;">Topic</div>
<div class="a" style="left:768.7px;top:255.8px;width:2.1px;height:2.1px;background:#444;border-radius:35%"></div>
<div class="a" style="left:768.7px;top:259.8px;width:2.1px;height:2.1px;background:#444;border-radius:35%"></div>
<div class="a" style="left:768.7px;top:263.7px;width:2.1px;height:2.1px;background:#444;border-radius:35%"></div>
<div class="t" style="left:937.3px;top:256.0px;font-size:9.7px;color:#77777f;">Status</div>
<div class="a" style="left:974.8px;top:255.8px;width:2.1px;height:2.1px;background:#444;border-radius:35%"></div>
<div class="a" style="left:974.8px;top:259.8px;width:2.1px;height:2.1px;background:#444;border-radius:35%"></div>
<div class="a" style="left:974.8px;top:263.7px;width:2.1px;height:2.1px;background:#444;border-radius:35%"></div>
<div class="t" style="left:1057.2px;top:256.0px;font-size:9.7px;color:#77777f;">Priority</div>
<div class="a" style="left:1098.7px;top:255.8px;width:2.1px;height:2.1px;background:#444;border-radius:35%"></div>
<div class="a" style="left:1098.7px;top:259.8px;width:2.1px;height:2.1px;background:#444;border-radius:35%"></div>
<div class="a" style="left:1098.7px;top:263.7px;width:2.1px;height:2.1px;background:#444;border-radius:35%"></div>
<div class="t" style="left:1192.0px;top:256.0px;font-size:9.7px;color:#77777f;">Assignee group</div>
<div class="a" style="left:1269.7px;top:255.8px;width:2.1px;height:2.1px;background:#444;border-radius:35%"></div>
<div class="a" style="left:1269.7px;top:259.8px;width:2.1px;height:2.1px;background:#444;border-radius:35%"></div>
<div class="a" style="left:1269.7px;top:263.7px;width:2.1px;height:2.1px;background:#444;border-radius:35%"></div>
<div class="t" style="left:1313.4px;top:256.0px;font-size:9.7px;color:#77777f;">Assignee persons</div>
<div class="a" style="left:1401.7px;top:255.8px;width:2.1px;height:2.1px;background:#444;border-radius:35%"></div>
<div class="a" style="left:1401.7px;top:259.8px;width:2.1px;height:2.1px;background:#444;border-radius:35%"></div>
<div class="a" style="left:1401.7px;top:263.7px;width:2.1px;height:2.1px;background:#444;border-radius:35%"></div>
<div class="t" style="left:1433.3px;top:256.0px;font-size:9.7px;color:#77777f;">Category</div>
<div class="a" style="left:1483.4px;top:255.8px;width:2.1px;height:2.1px;background:#444;border-radius:35%"></div>
<div class="a" style="left:1483.4px;top:259.8px;width:2.1px;height:2.1px;background:#444;border-radius:35%"></div>
<div class="a" style="left:1483.4px;top:263.7px;width:2.1px;height:2.1px;background:#444;border-radius:35%"></div>
<div class="t" style="left:1608.4px;top:256.0px;font-size:9.7px;color:#77777f;">Response time</div>
<div class="a" style="left:1683.0px;top:255.8px;width:2.1px;height:2.1px;background:#444;border-radius:35%"></div>
<div class="a" style="left:1683.0px;top:259.8px;width:2.1px;height:2.1px;background:#444;border-radius:35%"></div>
<div class="a" style="left:1683.0px;top:263.7px;width:2.1px;height:2.1px;background:#444;border-radius:35%"></div>
<div class="t" style="left:1728.4px;top:256.0px;font-size:9.7px;color:#77777f;">Resolution time</div>
<div class="a" style="left:1804.5px;top:255.8px;width:2.1px;height:2.1px;background:#444;border-radius:35%"></div>
<div class="a" style="left:1804.5px;top:259.8px;width:2.1px;height:2.1px;background:#444;border-radius:35%"></div>
<div class="a" style="left:1804.5px;top:263.7px;width:2.1px;height:2.1px;background:#444;border-radius:35%"></div>
<div class="a" style="left:353.2px;top:279.0px;width:81.1px;height:26.0px;background:#f6f7fc;border:1px solid #e2e8fb;border-radius:4px"></div>
<div class="a" style="left:438.0px;top:279.0px;width:24.7px;height:26.0px;background:#e7eafb;border-radius:4px"></div>
<svg class="a" style="left:444.9px;top:286.5px;" width="11" height="11" viewBox="0 0 11 11"><path d="M0.5 0.5 H10.5 L6.7 5 V10.5 L4.3 9 V5 Z" fill="#4f56d6"/></svg>
<div class="a" style="left:473.4px;top:279.0px;width:102.8px;height:26.0px;background:#f6f7fc;border:1px solid #e2e8fb;border-radius:4px"></div>
<div class="a" style="left:554.0px;top:280.0px;width:21.2px;height:24.0px;background:#eceefb;border-radius:0 3px 3px 0"></div>
<div class="a" style="left:561.9px;top:290.3px;width:6.5px;height:4.5px;background:#4f56d6;clip-path:polygon(0 0,100% 0,50% 100%)"></div>
<div class="a" style="left:579.0px;top:279.0px;width:25.6px;height:26.0px;background:#e7eafb;border-radius:4px"></div>
<svg class="a" style="left:586.3px;top:286.5px;" width="11" height="11" viewBox="0 0 11 11"><path d="M0.5 0.5 H10.5 L6.7 5 V10.5 L4.3 9 V5 Z" fill="#4f56d6"/></svg>
<div class="a" style="left:615.0px;top:279.0px;width:81.7px;height:26.0px;background:#f6f7fc;border:1px solid #e2e8fb;border-radius:4px"></div>
<div class="a" style="left:699.0px;top:279.0px;width:25.7px;height:26.0px;background:#e7eafb;border-radius:4px"></div>
<svg class="a" style="left:706.4px;top:286.5px;" width="11" height="11" viewBox="0 0 11 11"><path d="M0.5 0.5 H10.5 L6.7 5 V10.5 L4.3 9 V5 Z" fill="#4f56d6"/></svg>
<div class="a" style="left:735.0px;top:279.0px;width:163.7px;height:26.0px;background:#f6f7fc;border:1px solid #e2e8fb;border-radius:4px"></div>
<div class="a" style="left:902.4px;top:279.0px;width:24.3px;height:26.0px;background:#e7eafb;border-radius:4px"></div>
<svg class="a" style="left:909.0px;top:286.5px;" width="11" height="11" viewBox="0 0 11 11"><path d="M0.5 0.5 H10.5 L6.7 5 V10.5 L4.3 9 V5 Z" fill="#4f56d6"/></svg>
<div class="a" style="left:937.3px;top:279.0px;width:81.2px;height:26.0px;background:#f6f7fc;border:1px solid #e2e8fb;border-radius:4px"></div>
<div class="a" style="left:995.9px;top:280.0px;width:21.6px;height:24.0px;background:#eceefb;border-radius:0 3px 3px 0"></div>
<div class="a" style="left:1004.0px;top:290.3px;width:6.5px;height:4.5px;background:#4f56d6;clip-path:polygon(0 0,100% 0,50% 100%)"></div>
<div class="a" style="left:1022.0px;top:279.0px;width:25.0px;height:26.0px;background:#e7eafb;border-radius:4px"></div>
<svg class="a" style="left:1029.0px;top:286.5px;" width="11" height="11" viewBox="0 0 11 11"><path d="M0.5 0.5 H10.5 L6.7 5 V10.5 L4.3 9 V5 Z" fill="#4f56d6"/></svg>
<div class="a" style="left:1057.2px;top:279.0px;width:95.1px;height:26.0px;background:#f6f7fc;border:1px solid #e2e8fb;border-radius:4px"></div>
<div class="a" style="left:1131.3px;top:280.0px;width:20.0px;height:24.0px;background:#eceefb;border-radius:0 3px 3px 0"></div>
<div class="a" style="left:1138.6px;top:290.3px;width:6.5px;height:4.5px;background:#4f56d6;clip-path:polygon(0 0,100% 0,50% 100%)"></div>
<div class="a" style="left:1156.0px;top:279.0px;width:24.8px;height:26.0px;background:#e7eafb;border-radius:4px"></div>
<svg class="a" style="left:1162.9px;top:286.5px;" width="11" height="11" viewBox="0 0 11 11"><path d="M0.5 0.5 H10.5 L6.7 5 V10.5 L4.3 9 V5 Z" fill="#4f56d6"/></svg>
<div class="a" style="left:1192.0px;top:279.0px;width:82.7px;height:26.0px;background:#f6f7fc;border:1px solid #e2e8fb;border-radius:4px"></div>
<div class="a" style="left:1278.0px;top:279.0px;width:24.9px;height:26.0px;background:#e7eafb;border-radius:4px"></div>
<svg class="a" style="left:1285.0px;top:286.5px;" width="11" height="11" viewBox="0 0 11 11"><path d="M0.5 0.5 H10.5 L6.7 5 V10.5 L4.3 9 V5 Z" fill="#4f56d6"/></svg>
<div class="a" style="left:1313.4px;top:279.0px;width:81.2px;height:26.0px;background:#f6f7fc;border:1px solid #e2e8fb;border-radius:4px"></div>
<div class="a" style="left:1398.0px;top:279.0px;width:24.5px;height:26.0px;background:#e7eafb;border-radius:4px"></div>
<svg class="a" style="left:1404.8px;top:286.5px;" width="11" height="11" viewBox="0 0 11 11"><path d="M0.5 0.5 H10.5 L6.7 5 V10.5 L4.3 9 V5 Z" fill="#4f56d6"/></svg>
<div class="a" style="left:1433.5px;top:279.0px;width:136.0px;height:26.0px;background:#f6f7fc;border:1px solid #e2e8fb;border-radius:4px"></div>
<div class="a" style="left:1548.0px;top:280.0px;width:20.5px;height:24.0px;background:#eceefb;border-radius:0 3px 3px 0"></div>
<div class="a" style="left:1555.5px;top:290.3px;width:6.5px;height:4.5px;background:#4f56d6;clip-path:polygon(0 0,100% 0,50% 100%)"></div>
<div class="a" style="left:1573.0px;top:279.0px;width:24.8px;height:26.0px;background:#e7eafb;border-radius:4px"></div>
<svg class="a" style="left:1579.9px;top:286.5px;" width="11" height="11" viewBox="0 0 11 11"><path d="M0.5 0.5 H10.5 L6.7 5 V10.5 L4.3 9 V5 Z" fill="#4f56d6"/></svg>
<div class="a" style="left:257.0px;top:309.0px;width:1571.0px;height:1.0px;background:#e2e3ea"></div>
<div class="a" style="left:257.0px;top:341.0px;width:1571.0px;height:1.0px;background:#e5e5ec"></div>
<div class="a" style="left:262.2px;top:320.0px;width:10.8px;height:10.4px;background:#fff;border:1.3px solid #6a70d8;border-radius:2.5px"></div>
<div class="t" style="left:353.3px;top:321.0px;font-size:10px;color:#3d3d44;letter-spacing:0.46px">R/2024/1</div>
<div class="a" style="left:474.3px;top:317.0px;width:14.6px;height:9.6px;background:#2d34d6;box-shadow:0 0 0 0.8px #a8acf0"></div>
<div class="a" style="left:476.3px;top:327.7px;width:10.6px;height:1.3px;background:#8d92e8"></div>
<div class="t" style="left:494.6px;top:321.0px;font-size:10px;color:#3d3d44;letter-spacing:0.15px">Portal</div>
<div class="t" style="left:614.9px;top:321.0px;font-size:10px;color:#3d3d44;letter-spacing:0.27px">Administrator Oxari</div>
<div class="t" style="left:735.0px;top:321.0px;font-size:10px;color:#3d3d44;letter-spacing:0.215px">-</div>
<div class="a" style="left:937.3px;top:315.6px;width:109.7px;height:20px;background:#03877a;clip-path:polygon(5px 0,calc(100% - 5px) 0,100% 50%,calc(100% - 5px) 100%,5px 100%,0 50%)"></div>
<div class="t" style="left:937.3px;top:320.4px;width:109.7px;text-align:center;font-size:10px;letter-spacing:-0.3px;font-weight:bold;color:#fff">New</div>
<div class="t" style="left:1057.5px;top:321.0px;font-size:10px;color:#3d3d44;">-</div>
<div class="t" style="left:1433.3px;top:321.0px;font-size:10px;color:#3d3d44;letter-spacing:0.27px">Reservation</div>
<div class="a" style="left:257.0px;top:341.0px;width:1571.0px;height:43.0px;background:#d9dcf7"></div>
<div class="a" style="left:262.0px;top:357.5px;width:11.0px;height:10.0px;background:#2b33cf;border-radius:2.5px"></div>
<svg class="a" style="left:264.5px;top:360.0px;" width="6" height="5" viewBox="0 0 6 5"><path d="M0.6 2.5 L2.3 4.1 L5.4 0.8" stroke="#fff" stroke-width="1.2" fill="none"/></svg>
<svg class="a" style="left:297.0px;top:354.0px;" width="12" height="14" viewBox="0 0 12 14"><circle cx="6" cy="3.2" r="3.2" fill="#1b8a5e"/><path d="M0.2 13.5 C0.3 9.6 2.3 7.9 6 7.9 C9.7 7.9 11.7 9.6 11.8 13.5 Z" fill="#1b8a5e"/><path d="M5.3 8.3 H6.7 L7 13 H5 Z" fill="#f8f8fb" opacity="0.85"/><path d="M3.3 10.2 V13.2 M8.7 10.2 V13.2" stroke="#f8f8fb" stroke-width="0.6" opacity="0.8"/></svg>
<div class="t" style="left:353.3px;top:358.0px;font-size:10px;color:#5552cc;letter-spacing:0.46px">Incident/37/2024/6/13</div>
<div class="a" style="left:474.3px;top:354.5px;width:14.6px;height:9.6px;background:#2d34d6;box-shadow:0 0 0 0.8px #a8acf0"></div>
<div class="a" style="left:476.3px;top:365.2px;width:10.6px;height:1.3px;background:#8d92e8"></div>
<div class="t" style="left:494.6px;top:358.0px;font-size:10px;color:#5552cc;letter-spacing:0.15px">Portal</div>
<div class="t" style="left:614.9px;top:358.0px;font-size:10px;color:#5552cc;letter-spacing:0.27px">Administrator Oxari</div>
<div class="t" style="left:735.0px;top:358.0px;font-size:10px;color:#5552cc;letter-spacing:0.215px">Printer Failure</div>
<div class="a" style="left:937.3px;top:353.1px;width:109.7px;height:20px;background:#2c34d1;clip-path:polygon(5px 0,calc(100% - 5px) 0,100% 50%,calc(100% - 5px) 100%,5px 100%,0 50%)"></div>
<div class="t" style="left:937.3px;top:357.9px;width:109.7px;text-align:center;font-size:10px;letter-spacing:-0.3px;font-weight:bold;color:#fff">In progress</div>
<div class="a" style="left:1057.2px;top:353.1px;width:123.8px;height:20px;background:#f0566b;clip-path:polygon(5px 0,calc(100% - 5px) 0,100% 50%,calc(100% - 5px) 100%,5px 100%,0 50%)"></div>
<div class="t" style="left:1057.2px;top:357.9px;width:123.8px;text-align:center;font-size:10px;letter-spacing:-0.3px;font-weight:bold;color:#fff">Critical</div>
<div class="t" style="left:1192.0px;top:350.0px;font-size:10px;color:#5552cc;letter-spacing:0.33px">Hardware support</div>
<div class="t" style="left:1192.0px;top:366.0px;font-size:10px;color:#5552cc;letter-spacing:0.33px">group</div>
<div class="t" style="left:1433.3px;top:358.0px;font-size:10px;color:#5552cc;letter-spacing:0.27px">Printer failure</div>
<div class="a" style="left:1608.9px;top:353.9px;width:108.8px;height:20px;overflow:hidden"><div style="width:108.8px;height:20px;background:#e6e9ec;clip-path:polygon(5px 0,calc(100% - 5px) 0,100% 50%,calc(100% - 5px) 100%,5px 100%,0 50%)"></div></div>
<div class="a" style="left:1608.9px;top:353.9px;width:3px;height:20px;background:#0d1a9e;clip-path:polygon(100% 0,100% 100%,0 50%)"></div>
<div class="t" style="left:1616.9px;top:359.0px;font-size:10px;color:#303036;font-weight:bold;letter-spacing:-0.3px">3h 54m</div>
<div class="a" style="left:1728.9px;top:353.9px;width:101.1px;height:20px;overflow:hidden"><div style="width:160px;height:20px;background:linear-gradient(90deg,#0a90d6 0,#0a90d6 40px,#e6e9ec 40px);clip-path:polygon(5px 0,100% 0,100% 100%,5px 100%,0 50%)"></div></div>
<div class="a" style="left:1733.6px;top:356.1px;width:30.7px;height:14.7px;background:linear-gradient(90deg,#2a3bc4,#13208a);border-radius:7px"></div>
<div class="t" style="left:1735.4px;top:359.0px;font-size:10px;color:#fff;font-weight:bold;letter-spacing:-0.4px">5h 3m</div>
<div class="a" style="left:257.0px;top:416.0px;width:1571.0px;height:1.0px;background:#e5e5ec"></div>
<div class="a" style="left:262.2px;top:395.0px;width:10.8px;height:10.4px;background:#fff;border:1.3px solid #6a70d8;border-radius:2.5px"></div>
<div class="t" style="left:353.3px;top:396.0px;font-size:10px;color:#3d3d44;letter-spacing:0.46px">Request/2024/1</div>
<div class="a" style="left:474.3px;top:392.0px;width:14.6px;height:9.6px;background:#2d34d6;box-shadow:0 0 0 0.8px #a8acf0"></div>
<div class="a" style="left:476.3px;top:402.7px;width:10.6px;height:1.3px;background:#8d92e8"></div>
<div class="t" style="left:494.6px;top:396.0px;font-size:10px;color:#3d3d44;letter-spacing:0.15px">Portal</div>
<div class="t" style="left:614.9px;top:396.0px;font-size:10px;color:#3d3d44;letter-spacing:0.27px">Administrator Oxari</div>
<div class="t" style="left:735.0px;top:396.0px;font-size:10px;color:#3d3d44;letter-spacing:0.215px">-</div>
<div class="a" style="left:937.3px;top:390.6px;width:109.7px;height:20px;background:#bdcbbd;clip-path:polygon(5px 0,calc(100% - 5px) 0,100% 50%,calc(100% - 5px) 100%,5px 100%,0 50%)"></div>
<div class="t" style="left:937.3px;top:395.4px;width:109.7px;text-align:center;font-size:10px;letter-spacing:-0.3px;font-weight:bold;color:#2e2e2e">Closed</div>
<div class="a" style="left:1057.2px;top:390.6px;width:123.8px;height:20px;background:#fcbb57;clip-path:polygon(5px 0,calc(100% - 5px) 0,100% 50%,calc(100% - 5px) 100%,5px 100%,0 50%)"></div>
<div class="t" style="left:1057.2px;top:395.4px;width:123.8px;text-align:center;font-size:10px;letter-spacing:-0.3px;font-weight:bold;color:#2e2e2e">High</div>
<div class="t" style="left:1313.4px;top:396.0px;font-size:10px;color:#3d3d44;letter-spacing:0.27px">Emma Johnson</div>
<div class="t" style="left:1433.3px;top:396.0px;font-size:10px;color:#3d3d44;letter-spacing:0.27px">Granting permissions/access</div>
<div class="a" style="left:257.0px;top:459.0px;width:1571.0px;height:1.0px;background:#e5e5ec"></div>
<div class="a" style="left:262.2px;top:432.5px;width:10.8px;height:10.4px;background:#fff;border:1.3px solid #6a70d8;border-radius:2.5px"></div>
<svg class="a" style="left:297.0px;top:429.0px;" width="12" height="14" viewBox="0 0 12 14"><circle cx="6" cy="3.2" r="3.2" fill="#1b8a5e"/><path d="M0.2 13.5 C0.3 9.6 2.3 7.9 6 7.9 C9.7 7.9 11.7 9.6 11.8 13.5 Z" fill="#1b8a5e"/><path d="M5.3 8.3 H6.7 L7 13 H5 Z" fill="#f8f8fb" opacity="0.85"/><path d="M3.3 10.2 V13.2 M8.7 10.2 V13.2" stroke="#f8f8fb" stroke-width="0.6" opacity="0.8"/></svg>
<div class="t" style="left:353.3px;top:433.0px;font-size:10px;color:#3d3d44;letter-spacing:0.46px">Incident/36/2024/5/9</div>
<div class="a" style="left:474.3px;top:429.5px;width:14.6px;height:9.6px;background:#2d34d6;box-shadow:0 0 0 0.8px #a8acf0"></div>
<div class="a" style="left:476.3px;top:440.2px;width:10.6px;height:1.3px;background:#8d92e8"></div>
<div class="t" style="left:494.6px;top:433.0px;font-size:10px;color:#3d3d44;letter-spacing:0.15px">Portal</div>
<div class="t" style="left:614.9px;top:433.0px;font-size:10px;color:#3d3d44;letter-spacing:0.27px">Sophia Baker</div>
<div class="t" style="left:735.0px;top:433.0px;font-size:10px;color:#3d3d44;letter-spacing:0.215px">Hardware failure - Laptop</div>
<div class="a" style="left:937.3px;top:428.1px;width:109.7px;height:20px;background:#bdcbbd;clip-path:polygon(5px 0,calc(100% - 5px) 0,100% 50%,calc(100% - 5px) 100%,5px 100%,0 50%)"></div>
<div class="t" style="left:937.3px;top:432.9px;width:109.7px;text-align:center;font-size:10px;letter-spacing:-0.3px;font-weight:bold;color:#2e2e2e">Closed</div>
<div class="a" style="left:1057.2px;top:428.1px;width:123.8px;height:20px;background:#f0566b;clip-path:polygon(5px 0,calc(100% - 5px) 0,100% 50%,calc(100% - 5px) 100%,5px 100%,0 50%)"></div>
<div class="t" style="left:1057.2px;top:432.9px;width:123.8px;text-align:center;font-size:10px;letter-spacing:-0.3px;font-weight:bold;color:#fff">Critical</div>
<div class="t" style="left:1192.0px;top:425.0px;font-size:10px;color:#3d3d44;letter-spacing:0.33px">Hardware support</div>
<div class="t" style="left:1192.0px;top:441.0px;font-size:10px;color:#3d3d44;letter-spacing:0.33px">group</div>
<div class="t" style="left:1313.4px;top:433.0px;font-size:10px;color:#3d3d44;letter-spacing:0.27px">Ethan Walker</div>
<div class="t" style="left:1433.3px;top:433.0px;font-size:10px;color:#3d3d44;letter-spacing:0.27px">Workstation failure</div>
<div class="a" style="left:1608.9px;top:428.9px;width:108.8px;height:20px;overflow:hidden"><div style="width:108.8px;height:20px;background:#e6e9ec;clip-path:polygon(5px 0,calc(100% - 5px) 0,100% 50%,calc(100% - 5px) 100%,5px 100%,0 50%)"></div></div>
<div class="t" style="left:1616.9px;top:434.0px;font-size:10px;color:#303036;font-weight:bold;letter-spacing:-0.3px">4h 0m</div>
<div class="a" style="left:1728.9px;top:428.9px;width:101.1px;height:20px;overflow:hidden"><div style="width:108.8px;height:20px;background:#e6e9ec;clip-path:polygon(5px 0,calc(100% - 5px) 0,100% 50%,calc(100% - 5px) 100%,5px 100%,0 50%)"></div></div>
<div class="t" style="left:1736.9px;top:434.0px;font-size:10px;color:#303036;font-weight:bold;letter-spacing:-0.3px">8h 0m</div>
<div class="a" style="left:257.0px;top:491.0px;width:1571.0px;height:1.0px;background:#e5e5ec"></div>
<div class="a" style="left:262.2px;top:470.0px;width:10.8px;height:10.4px;background:#fff;border:1.3px solid #6a70d8;border-radius:2.5px"></div>
<div class="t" style="left:353.3px;top:471.0px;font-size:10px;color:#3d3d44;letter-spacing:0.46px">P/1/2024/4/18</div>
<div class="a" style="left:474.3px;top:467.0px;width:14.6px;height:9.6px;background:#2d34d6;box-shadow:0 0 0 0.8px #a8acf0"></div>
<div class="a" style="left:476.3px;top:477.7px;width:10.6px;height:1.3px;background:#8d92e8"></div>
<div class="t" style="left:494.6px;top:471.0px;font-size:10px;color:#3d3d44;letter-spacing:0.15px">Portal</div>
<div class="t" style="left:614.9px;top:471.0px;font-size:10px;color:#3d3d44;letter-spacing:0.27px">Administrator Oxari</div>
<div class="t" style="left:735.0px;top:471.0px;font-size:10px;color:#3d3d44;letter-spacing:0.215px">Problem</div>
<div class="a" style="left:937.3px;top:465.6px;width:109.7px;height:20px;background:#03877a;clip-path:polygon(5px 0,calc(100% - 5px) 0,100% 50%,calc(100% - 5px) 100%,5px 100%,0 50%)"></div>
<div class="t" style="left:937.3px;top:470.4px;width:109.7px;text-align:center;font-size:10px;letter-spacing:-0.3px;font-weight:bold;color:#fff">New</div>
<div class="t" style="left:1057.5px;top:471.0px;font-size:10px;color:#3d3d44;">-</div>
<div class="t" style="left:1433.3px;top:471.0px;font-size:10px;color:#3d3d44;letter-spacing:0.27px">Problem</div>
<div class="a" style="left:257.0px;top:525.0px;width:1571.0px;height:1.0px;background:#e5e5ec"></div>
<div class="a" style="left:262.2px;top:503.0px;width:10.8px;height:10.4px;background:#fff;border:1.3px solid #6a70d8;border-radius:2.5px"></div>
<div class="t" style="left:353.3px;top:504.0px;font-size:10px;color:#3d3d44;letter-spacing:0.46px">Incident/35/2024/4/15</div>
<div class="a" style="left:474.3px;top:500.0px;width:14.6px;height:9.6px;background:#2d34d6;box-shadow:0 0 0 0.8px #a8acf0"></div>
<div class="a" style="left:476.3px;top:510.7px;width:10.6px;height:1.3px;background:#8d92e8"></div>
<div class="t" style="left:494.6px;top:504.0px;font-size:10px;color:#3d3d44;letter-spacing:0.15px">Portal</div>
<div class="t" style="left:614.9px;top:504.0px;font-size:10px;color:#3d3d44;letter-spacing:0.27px">Administrator Oxari</div>
<div class="t" style="left:735.0px;top:504.0px;font-size:10px;color:#3d3d44;letter-spacing:0.215px">Software failure - Outlook</div>
<div class="a" style="left:937.3px;top:498.6px;width:109.7px;height:20px;background:#03877a;clip-path:polygon(5px 0,calc(100% - 5px) 0,100% 50%,calc(100% - 5px) 100%,5px 100%,0 50%)"></div>
<div class="t" style="left:937.3px;top:503.4px;width:109.7px;text-align:center;font-size:10px;letter-spacing:-0.3px;font-weight:bold;color:#fff">New</div>
<div class="a" style="left:1057.2px;top:498.6px;width:123.8px;height:20px;background:#03877a;clip-path:polygon(5px 0,calc(100% - 5px) 0,100% 50%,calc(100% - 5px) 100%,5px 100%,0 50%)"></div>
<div class="t" style="left:1057.2px;top:503.4px;width:123.8px;text-align:center;font-size:10px;letter-spacing:-0.3px;font-weight:bold;color:#fff">Medium</div>
<div class="t" style="left:1313.4px;top:504.0px;font-size:10px;color:#3d3d44;letter-spacing:0.27px">Charlotte White</div>
<div class="t" style="left:1433.3px;top:504.0px;font-size:10px;color:#3d3d44;letter-spacing:0.27px">Software failure</div>
<div class="a" style="left:1608.9px;top:499.4px;width:108.8px;height:20px;overflow:hidden"><div style="width:108.8px;height:20px;background:linear-gradient(90deg,#d62b2e 0%,#a8141a 55%,#760608 100%);clip-path:polygon(5px 0,calc(100% - 5px) 0,100% 50%,calc(100% - 5px) 100%,5px 100%,0 50%)"></div></div>
<div class="t" style="left:1606.9px;top:504.2px;width:108.8px;text-align:center;font-size:10px;letter-spacing:-0.3px;font-weight:bold;color:#fff"><span style="display:inline-block;width:0;height:0;border-left:8.4px solid #fff;border-top:4.8px solid transparent;border-bottom:4.8px solid transparent;margin-right:5.6px;vertical-align:-1.2px"></span>14d 6h 40m</div>
<div class="a" style="left:257.0px;top:567.0px;width:1571.0px;height:1.0px;background:#e5e5ec"></div>
<div class="a" style="left:262.2px;top:541.0px;width:10.8px;height:10.4px;background:#fff;border:1.3px solid #6a70d8;border-radius:2.5px"></div>
<svg class="a" style="left:297.0px;top:537.5px;" width="12" height="14" viewBox="0 0 12 14"><circle cx="6" cy="3.2" r="3.2" fill="#dc3545"/><path d="M0.2 13.5 C0.3 9.6 2.3 7.9 6 7.9 C9.7 7.9 11.7 9.6 11.8 13.5 Z" fill="#dc3545"/><path d="M5.3 8.3 H6.7 L7 13 H5 Z" fill="#f8f8fb" opacity="0.85"/><path d="M3.3 10.2 V13.2 M8.7 10.2 V13.2" stroke="#f8f8fb" stroke-width="0.6" opacity="0.8"/></svg>
<div class="t" style="left:353.3px;top:542.0px;font-size:10px;color:#3d3d44;letter-spacing:0.46px">Incident/34/2024/3/6</div>
<div class="a" style="left:474.3px;top:538.0px;width:14.6px;height:9.6px;background:#2d34d6;box-shadow:0 0 0 0.8px #a8acf0"></div>
<div class="a" style="left:476.3px;top:548.7px;width:10.6px;height:1.3px;background:#8d92e8"></div>
<div class="t" style="left:494.6px;top:542.0px;font-size:10px;color:#3d3d44;letter-spacing:0.15px">Portal</div>
<div class="t" style="left:614.9px;top:542.0px;font-size:10px;color:#3d3d44;letter-spacing:0.27px">Logan Scott</div>
<div class="t" style="left:735.0px;top:542.0px;font-size:10px;color:#3d3d44;letter-spacing:0.215px">Hardware failure - Laptop</div>
<div class="a" style="left:937.3px;top:536.6px;width:109.7px;height:20px;background:#3f45cc;clip-path:polygon(5px 0,calc(100% - 5px) 0,100% 50%,calc(100% - 5px) 100%,5px 100%,0 50%)"></div>
<div class="t" style="left:937.3px;top:541.4px;width:109.7px;text-align:center;font-size:10px;letter-spacing:-0.3px;font-weight:bold;color:#fff">Resumed</div>
<div class="a" style="left:1057.2px;top:536.6px;width:123.8px;height:20px;background:#f0566b;clip-path:polygon(5px 0,calc(100% - 5px) 0,100% 50%,calc(100% - 5px) 100%,5px 100%,0 50%)"></div>
<div class="t" style="left:1057.2px;top:541.4px;width:123.8px;text-align:center;font-size:10px;letter-spacing:-0.3px;font-weight:bold;color:#fff">Critical</div>
<div class="t" style="left:1192.0px;top:534.0px;font-size:10px;color:#3d3d44;letter-spacing:0.33px">Hardware support</div>
<div class="t" style="left:1192.0px;top:550.0px;font-size:10px;color:#3d3d44;letter-spacing:0.33px">group</div>
<div class="t" style="left:1313.4px;top:542.0px;font-size:10px;color:#3d3d44;letter-spacing:0.27px">Administrator Oxari</div>
<div class="t" style="left:1433.3px;top:542.0px;font-size:10px;color:#3d3d44;letter-spacing:0.27px">Workstation failure</div>
<div class="a" style="left:1608.9px;top:537.4px;width:108.8px;height:20px;overflow:hidden"><div style="width:108.8px;height:20px;background:#e6e9ec;clip-path:polygon(5px 0,calc(100% - 5px) 0,100% 50%,calc(100% - 5px) 100%,5px 100%,0 50%)"></div></div>
<div class="t" style="left:1616.9px;top:543.0px;font-size:10px;color:#303036;font-weight:bold;letter-spacing:-0.3px">4h 0m</div>
<div class="a" style="left:1728.9px;top:537.4px;width:101.1px;height:20px;overflow:hidden"><div style="width:108.8px;height:20px;background:linear-gradient(90deg,#d62b2e 0%,#a8141a 55%,#760608 100%);clip-path:polygon(5px 0,calc(100% - 5px) 0,100% 50%,calc(100% - 5px) 100%,5px 100%,0 50%)"></div></div>
<div class="t" style="left:1726.9px;top:542.2px;width:108.8px;text-align:center;font-size:10px;letter-spacing:-0.3px;font-weight:bold;color:#fff"><span style="display:inline-block;width:0;height:0;border-left:8.4px solid #fff;border-top:4.8px solid transparent;border-bottom:4.8px solid transparent;margin-right:5.6px;vertical-align:-1.2px"></span>23d 5h 34m</div>
<div class="a" style="left:257.0px;top:601.0px;width:1571.0px;height:1.0px;background:#e5e5ec"></div>
<div class="a" style="left:262.2px;top:579.0px;width:10.8px;height:10.4px;background:#fff;border:1.3px solid #6a70d8;border-radius:2.5px"></div>
<div class="t" style="left:353.3px;top:580.0px;font-size:10px;color:#3d3d44;letter-spacing:0.46px">Incident/30/2024/2/15</div>
<div class="a" style="left:474.3px;top:576.0px;width:14.6px;height:9.6px;background:#2d34d6;box-shadow:0 0 0 0.8px #a8acf0"></div>
<div class="a" style="left:476.3px;top:586.7px;width:10.6px;height:1.3px;background:#8d92e8"></div>
<div class="t" style="left:494.6px;top:580.0px;font-size:10px;color:#3d3d44;letter-spacing:0.15px">Portal</div>
<div class="t" style="left:614.9px;top:580.0px;font-size:10px;color:#3d3d44;letter-spacing:0.27px">Benjamin Anderson</div>
<div class="t" style="left:735.0px;top:580.0px;font-size:10px;color:#3d3d44;letter-spacing:0.215px">Software failure - 7-zip</div>
<div class="a" style="left:937.3px;top:574.6px;width:109.7px;height:20px;background:#03877a;clip-path:polygon(5px 0,calc(100% - 5px) 0,100% 50%,calc(100% - 5px) 100%,5px 100%,0 50%)"></div>
<div class="t" style="left:937.3px;top:579.4px;width:109.7px;text-align:center;font-size:10px;letter-spacing:-0.3px;font-weight:bold;color:#fff">New</div>
<div class="a" style="left:1057.2px;top:574.6px;width:123.8px;height:20px;background:#03877a;clip-path:polygon(5px 0,calc(100% - 5px) 0,100% 50%,calc(100% - 5px) 100%,5px 100%,0 50%)"></div>
<div class="t" style="left:1057.2px;top:579.4px;width:123.8px;text-align:center;font-size:10px;letter-spacing:-0.3px;font-weight:bold;color:#fff">Medium</div>
<div class="t" style="left:1313.4px;top:580.0px;font-size:10px;color:#3d3d44;letter-spacing:0.27px">Charlotte White</div>
<div class="t" style="left:1433.3px;top:580.0px;font-size:10px;color:#3d3d44;letter-spacing:0.27px">Software failure</div>
<div class="a" style="left:1608.9px;top:575.4px;width:108.8px;height:20px;overflow:hidden"><div style="width:108.8px;height:20px;background:linear-gradient(90deg,#d62b2e 0%,#a8141a 55%,#760608 100%);clip-path:polygon(5px 0,calc(100% - 5px) 0,100% 50%,calc(100% - 5px) 100%,5px 100%,0 50%)"></div></div>
<div class="t" style="left:1606.9px;top:580.2px;width:108.8px;text-align:center;font-size:10px;letter-spacing:-0.3px;font-weight:bold;color:#fff"><span style="display:inline-block;width:0;height:0;border-left:8.4px solid #fff;border-top:4.8px solid transparent;border-bottom:4.8px solid transparent;margin-right:5.6px;vertical-align:-1.2px"></span>28d 5h 35m</div>
<div class="a" style="left:257.0px;top:644.0px;width:1571.0px;height:1.0px;background:#e5e5ec"></div>
<div class="a" style="left:262.2px;top:617.5px;width:10.8px;height:10.4px;background:#fff;border:1.3px solid #6a70d8;border-radius:2.5px"></div>
<div class="t" style="left:353.3px;top:618.0px;font-size:10px;color:#3d3d44;letter-spacing:0.46px">Incident/29/2024/2/15</div>
<div class="a" style="left:474.3px;top:614.5px;width:14.6px;height:9.6px;background:#2d34d6;box-shadow:0 0 0 0.8px #a8acf0"></div>
<div class="a" style="left:476.3px;top:625.2px;width:10.6px;height:1.3px;background:#8d92e8"></div>
<div class="t" style="left:494.6px;top:618.0px;font-size:10px;color:#3d3d44;letter-spacing:0.15px">Portal</div>
<div class="t" style="left:614.9px;top:618.0px;font-size:10px;color:#3d3d44;letter-spacing:0.27px">Benjamin Anderson</div>
<div class="t" style="left:735.0px;top:618.0px;font-size:10px;color:#3d3d44;letter-spacing:0.215px">Hardware failure - Laptop</div>
<div class="a" style="left:937.3px;top:613.1px;width:109.7px;height:20px;background:#03877a;clip-path:polygon(5px 0,calc(100% - 5px) 0,100% 50%,calc(100% - 5px) 100%,5px 100%,0 50%)"></div>
<div class="t" style="left:937.3px;top:617.9px;width:109.7px;text-align:center;font-size:10px;letter-spacing:-0.3px;font-weight:bold;color:#fff">New</div>
<div class="a" style="left:1057.2px;top:613.1px;width:123.8px;height:20px;background:#f0566b;clip-path:polygon(5px 0,calc(100% - 5px) 0,100% 50%,calc(100% - 5px) 100%,5px 100%,0 50%)"></div>
<div class="t" style="left:1057.2px;top:617.9px;width:123.8px;text-align:center;font-size:10px;letter-spacing:-0.3px;font-weight:bold;color:#fff">Critical</div>
<div class="t" style="left:1192.0px;top:610.0px;font-size:10px;color:#3d3d44;letter-spacing:0.33px">Hardware support</div>
<div class="t" style="left:1192.0px;top:626.0px;font-size:10px;color:#3d3d44;letter-spacing:0.33px">group</div>
<div class="t" style="left:1433.3px;top:618.0px;font-size:10px;color:#3d3d44;letter-spacing:0.27px">Workstation failure</div>
<div class="a" style="left:1608.9px;top:613.9px;width:108.8px;height:20px;overflow:hidden"><div style="width:108.8px;height:20px;background:linear-gradient(90deg,#d62b2e 0%,#a8141a 55%,#760608 100%);clip-path:polygon(5px 0,calc(100% - 5px) 0,100% 50%,calc(100% - 5px) 100%,5px 100%,0 50%)"></div></div>
<div class="t" style="left:1606.9px;top:618.7px;width:108.8px;text-align:center;font-size:10px;letter-spacing:-0.3px;font-weight:bold;color:#fff"><span style="display:inline-block;width:0;height:0;border-left:8.4px solid #fff;border-top:4.8px solid transparent;border-bottom:4.8px solid transparent;margin-right:5.6px;vertical-align:-1.2px"></span>28d 7h 35m</div>
<div class="a" style="left:257.0px;top:686.0px;width:1571.0px;height:1.0px;background:#e5e5ec"></div>
<div class="a" style="left:262.2px;top:660.0px;width:10.8px;height:10.4px;background:#fff;border:1.3px solid #6a70d8;border-radius:2.5px"></div>
<div class="t" style="left:353.3px;top:661.0px;font-size:10px;color:#3d3d44;letter-spacing:0.46px">Incident/28/2024/2/15</div>
<div class="a" style="left:474.3px;top:657.0px;width:14.6px;height:9.6px;background:#2d34d6;box-shadow:0 0 0 0.8px #a8acf0"></div>
<div class="a" style="left:476.3px;top:667.7px;width:10.6px;height:1.3px;background:#8d92e8"></div>
<div class="t" style="left:494.6px;top:661.0px;font-size:10px;color:#3d3d44;letter-spacing:0.15px">Portal</div>
<div class="t" style="left:614.9px;top:661.0px;font-size:10px;color:#3d3d44;letter-spacing:0.27px">Benjamin Anderson</div>
<div class="t" style="left:735.0px;top:661.0px;font-size:10px;color:#3d3d44;letter-spacing:0.215px">Hardware failure - Monitor</div>
<div class="a" style="left:937.3px;top:655.6px;width:109.7px;height:20px;background:#2c34d1;clip-path:polygon(5px 0,calc(100% - 5px) 0,100% 50%,calc(100% - 5px) 100%,5px 100%,0 50%)"></div>
<div class="t" style="left:937.3px;top:660.4px;width:109.7px;text-align:center;font-size:10px;letter-spacing:-0.3px;font-weight:bold;color:#fff">In progress</div>
<div class="a" style="left:1057.2px;top:655.6px;width:123.8px;height:20px;background:#fcbb57;clip-path:polygon(5px 0,calc(100% - 5px) 0,100% 50%,calc(100% - 5px) 100%,5px 100%,0 50%)"></div>
<div class="t" style="left:1057.2px;top:660.4px;width:123.8px;text-align:center;font-size:10px;letter-spacing:-0.3px;font-weight:bold;color:#2e2e2e">High</div>
<div class="t" style="left:1192.0px;top:653.0px;font-size:10px;color:#3d3d44;letter-spacing:0.33px">Hardware support</div>
<div class="t" style="left:1192.0px;top:669.0px;font-size:10px;color:#3d3d44;letter-spacing:0.33px">group</div>
<div class="t" style="left:1433.3px;top:661.0px;font-size:10px;color:#3d3d44;letter-spacing:0.27px">Workstation failure</div>
<div class="a" style="left:1608.9px;top:656.4px;width:108.8px;height:20px;overflow:hidden"><div style="width:108.8px;height:20px;background:#e6e9ec;clip-path:polygon(5px 0,calc(100% - 5px) 0,100% 50%,calc(100% - 5px) 100%,5px 100%,0 50%)"></div></div>
<div class="a" style="left:1608.9px;top:656.4px;width:3px;height:20px;background:#0d1a9e;clip-path:polygon(100% 0,100% 100%,0 50%)"></div>
<div class="t" style="left:1616.9px;top:662.0px;font-size:10px;color:#303036;font-weight:bold;letter-spacing:-0.3px">3h 48m</div>
<div class="a" style="left:1728.9px;top:656.4px;width:101.1px;height:20px;overflow:hidden"><div style="width:108.8px;height:20px;background:linear-gradient(90deg,#d62b2e 0%,#a8141a 55%,#760608 100%);clip-path:polygon(5px 0,calc(100% - 5px) 0,100% 50%,calc(100% - 5px) 100%,5px 100%,0 50%)"></div></div>
<div class="t" style="left:1726.9px;top:661.2px;width:108.8px;text-align:center;font-size:10px;letter-spacing:-0.3px;font-weight:bold;color:#fff"><span style="display:inline-block;width:0;height:0;border-left:8.4px solid #fff;border-top:4.8px solid transparent;border-bottom:4.8px solid transparent;margin-right:5.6px;vertical-align:-1.2px"></span>28d 3h 24m</div>
<div class="a" style="left:257.0px;top:720.0px;width:1571.0px;height:1.0px;background:#e5e5ec"></div>
<div class="a" style="left:262.2px;top:698.0px;width:10.8px;height:10.4px;background:#fff;border:1.3px solid #6a70d8;border-radius:2.5px"></div>
<div class="t" style="left:353.3px;top:699.0px;font-size:10px;color:#3d3d44;letter-spacing:0.46px">Incident/27/2024/2/15</div>
<div class="a" style="left:474.3px;top:695.0px;width:14.6px;height:9.6px;background:#2d34d6;box-shadow:0 0 0 0.8px #a8acf0"></div>
<div class="a" style="left:476.3px;top:705.7px;width:10.6px;height:1.3px;background:#8d92e8"></div>
<div class="t" style="left:494.6px;top:699.0px;font-size:10px;color:#3d3d44;letter-spacing:0.15px">Portal</div>
<div class="t" style="left:614.9px;top:699.0px;font-size:10px;color:#3d3d44;letter-spacing:0.27px">Benjamin Anderson</div>
<div class="t" style="left:735.0px;top:699.0px;font-size:10px;color:#3d3d44;letter-spacing:0.215px">Software failure - Excel</div>
<div class="a" style="left:937.3px;top:693.6px;width:109.7px;height:20px;background:#bdcbbd;clip-path:polygon(5px 0,calc(100% - 5px) 0,100% 50%,calc(100% - 5px) 100%,5px 100%,0 50%)"></div>
<div class="t" style="left:937.3px;top:698.4px;width:109.7px;text-align:center;font-size:10px;letter-spacing:-0.3px;font-weight:bold;color:#2e2e2e">Closed</div>
<div class="a" style="left:1057.2px;top:693.6px;width:123.8px;height:20px;background:#c5d5c5;clip-path:polygon(5px 0,calc(100% - 5px) 0,100% 50%,calc(100% - 5px) 100%,5px 100%,0 50%)"></div>
<div class="t" style="left:1057.2px;top:698.4px;width:123.8px;text-align:center;font-size:10px;letter-spacing:-0.3px;font-weight:bold;color:#2e2e2e">Low</div>
<div class="t" style="left:1313.4px;top:699.0px;font-size:10px;color:#3d3d44;letter-spacing:0.27px">Charlotte White</div>
<div class="t" style="left:1433.3px;top:699.0px;font-size:10px;color:#3d3d44;letter-spacing:0.27px">Software failure</div>
<div class="a" style="left:1608.9px;top:694.4px;width:108.8px;height:20px;overflow:hidden"><div style="width:108.8px;height:20px;background:linear-gradient(90deg,#d62b2e 0%,#a8141a 55%,#760608 100%);clip-path:polygon(5px 0,calc(100% - 5px) 0,100% 50%,calc(100% - 5px) 100%,5px 100%,0 50%)"></div></div>
<div class="t" style="left:1606.9px;top:699.2px;width:108.8px;text-align:center;font-size:10px;letter-spacing:-0.3px;font-weight:bold;color:#fff"><span style="display:inline-block;width:0;height:0;border-left:8.4px solid #fff;border-top:4.8px solid transparent;border-bottom:4.8px solid transparent;margin-right:5.6px;vertical-align:-1.2px"></span>28d 5h 37m</div>
<div class="a" style="left:257.0px;top:754.0px;width:1571.0px;height:1.0px;background:#e5e5ec"></div>
<div class="a" style="left:262.2px;top:732.0px;width:10.8px;height:10.4px;background:#fff;border:1.3px solid #6a70d8;border-radius:2.5px"></div>
<svg class="a" style="left:297.0px;top:728.5px;" width="12" height="14" viewBox="0 0 12 14"><circle cx="6" cy="3.2" r="3.2" fill="#1b8a5e"/><path d="M0.2 13.5 C0.3 9.6 2.3 7.9 6 7.9 C9.7 7.9 11.7 9.6 11.8 13.5 Z" fill="#1b8a5e"/><path d="M5.3 8.3 H6.7 L7 13 H5 Z" fill="#f8f8fb" opacity="0.85"/><path d="M3.3 10.2 V13.2 M8.7 10.2 V13.2" stroke="#f8f8fb" stroke-width="0.6" opacity="0.8"/></svg>
<div class="t" style="left:353.3px;top:733.0px;font-size:10px;color:#3d3d44;letter-spacing:0.46px">Incident/26/2024/2/15</div>
<div class="a" style="left:474.3px;top:729.0px;width:14.6px;height:9.6px;background:#2d34d6;box-shadow:0 0 0 0.8px #a8acf0"></div>
<div class="a" style="left:476.3px;top:739.7px;width:10.6px;height:1.3px;background:#8d92e8"></div>
<div class="t" style="left:494.6px;top:733.0px;font-size:10px;color:#3d3d44;letter-spacing:0.15px">Portal</div>
<div class="t" style="left:614.9px;top:733.0px;font-size:10px;color:#3d3d44;letter-spacing:0.27px">Benjamin Anderson</div>
<div class="t" style="left:735.0px;top:733.0px;font-size:10px;color:#3d3d44;letter-spacing:0.215px">Software failure - Word</div>
<div class="a" style="left:937.3px;top:727.6px;width:109.7px;height:20px;background:#2c34d1;clip-path:polygon(5px 0,calc(100% - 5px) 0,100% 50%,calc(100% - 5px) 100%,5px 100%,0 50%)"></div>
<div class="t" style="left:937.3px;top:732.4px;width:109.7px;text-align:center;font-size:10px;letter-spacing:-0.3px;font-weight:bold;color:#fff">In progress</div>
<div class="a" style="left:1057.2px;top:727.6px;width:123.8px;height:20px;background:#03877a;clip-path:polygon(5px 0,calc(100% - 5px) 0,100% 50%,calc(100% - 5px) 100%,5px 100%,0 50%)"></div>
<div class="t" style="left:1057.2px;top:732.4px;width:123.8px;text-align:center;font-size:10px;letter-spacing:-0.3px;font-weight:bold;color:#fff">Medium</div>
<div class="t" style="left:1313.4px;top:733.0px;font-size:10px;color:#3d3d44;letter-spacing:0.27px">Charlotte White</div>
<div class="t" style="left:1433.3px;top:733.0px;font-size:10px;color:#3d3d44;letter-spacing:0.27px">Software failure</div>
<div class="a" style="left:1608.9px;top:728.4px;width:108.8px;height:20px;overflow:hidden"><div style="width:108.8px;height:20px;background:#e6e9ec;clip-path:polygon(5px 0,calc(100% - 5px) 0,100% 50%,calc(100% - 5px) 100%,5px 100%,0 50%)"></div></div>
<div class="a" style="left:1608.9px;top:728.4px;width:3px;height:20px;background:#0d1a9e;clip-path:polygon(100% 0,100% 100%,0 50%)"></div>
<div class="t" style="left:1616.9px;top:734.0px;font-size:10px;color:#303036;font-weight:bold;letter-spacing:-0.3px">5h 49m</div>
<div class="a" style="left:1728.9px;top:728.4px;width:101.1px;height:20px;overflow:hidden"><div style="width:108.8px;height:20px;background:linear-gradient(90deg,#d62b2e 0%,#a8141a 55%,#760608 100%);clip-path:polygon(5px 0,calc(100% - 5px) 0,100% 50%,calc(100% - 5px) 100%,5px 100%,0 50%)"></div></div>
<div class="t" style="left:1726.9px;top:733.2px;width:108.8px;text-align:center;font-size:10px;letter-spacing:-0.3px;font-weight:bold;color:#fff"><span style="display:inline-block;width:0;height:0;border-left:8.4px solid #fff;border-top:4.8px solid transparent;border-bottom:4.8px solid transparent;margin-right:5.6px;vertical-align:-1.2px"></span>27d 23h 27m</div>
<div class="a" style="left:257.0px;top:788.0px;width:1571.0px;height:1.0px;background:#e5e5ec"></div>
<div class="a" style="left:262.2px;top:766.0px;width:10.8px;height:10.4px;background:#fff;border:1.3px solid #6a70d8;border-radius:2.5px"></div>
<div class="t" style="left:353.3px;top:767.0px;font-size:10px;color:#3d3d44;letter-spacing:0.46px">Incident/25/2024/2/15</div>
<div class="a" style="left:474.3px;top:763.0px;width:14.6px;height:9.6px;background:#2d34d6;box-shadow:0 0 0 0.8px #a8acf0"></div>
<div class="a" style="left:476.3px;top:773.7px;width:10.6px;height:1.3px;background:#8d92e8"></div>
<div class="t" style="left:494.6px;top:767.0px;font-size:10px;color:#3d3d44;letter-spacing:0.15px">Portal</div>
<div class="t" style="left:614.9px;top:767.0px;font-size:10px;color:#3d3d44;letter-spacing:0.27px">Benjamin Anderson</div>
<div class="t" style="left:735.0px;top:767.0px;font-size:10px;color:#3d3d44;letter-spacing:0.215px">Software failure - Other</div>
<div class="a" style="left:937.3px;top:761.6px;width:109.7px;height:20px;background:#03877a;clip-path:polygon(5px 0,calc(100% - 5px) 0,100% 50%,calc(100% - 5px) 100%,5px 100%,0 50%)"></div>
<div class="t" style="left:937.3px;top:766.4px;width:109.7px;text-align:center;font-size:10px;letter-spacing:-0.3px;font-weight:bold;color:#fff">New</div>
<div class="a" style="left:1057.2px;top:761.6px;width:123.8px;height:20px;background:#fcbb57;clip-path:polygon(5px 0,calc(100% - 5px) 0,100% 50%,calc(100% - 5px) 100%,5px 100%,0 50%)"></div>
<div class="t" style="left:1057.2px;top:766.4px;width:123.8px;text-align:center;font-size:10px;letter-spacing:-0.3px;font-weight:bold;color:#2e2e2e">High</div>
<div class="t" style="left:1313.4px;top:767.0px;font-size:10px;color:#3d3d44;letter-spacing:0.27px">Charlotte White</div>
<div class="t" style="left:1433.3px;top:767.0px;font-size:10px;color:#3d3d44;letter-spacing:0.27px">Software failure</div>
<div class="a" style="left:1608.9px;top:762.4px;width:108.8px;height:20px;overflow:hidden"><div style="width:108.8px;height:20px;background:linear-gradient(90deg,#d62b2e 0%,#a8141a 55%,#760608 100%);clip-path:polygon(5px 0,calc(100% - 5px) 0,100% 50%,calc(100% - 5px) 100%,5px 100%,0 50%)"></div></div>
<div class="t" style="left:1606.9px;top:767.2px;width:108.8px;text-align:center;font-size:10px;letter-spacing:-0.3px;font-weight:bold;color:#fff"><span style="display:inline-block;width:0;height:0;border-left:8.4px solid #fff;border-top:4.8px solid transparent;border-bottom:4.8px solid transparent;margin-right:5.6px;vertical-align:-1.2px"></span>28d 5h 38m</div>
<div class="a" style="left:257.0px;top:822.0px;width:1571.0px;height:1.0px;background:#e5e5ec"></div>
<div class="a" style="left:262.2px;top:800.0px;width:10.8px;height:10.4px;background:#fff;border:1.3px solid #6a70d8;border-radius:2.5px"></div>
<div class="t" style="left:353.3px;top:801.0px;font-size:10px;color:#3d3d44;letter-spacing:0.46px">Incident/24/2024/2/15</div>
<div class="a" style="left:474.3px;top:797.0px;width:14.6px;height:9.6px;background:#2d34d6;box-shadow:0 0 0 0.8px #a8acf0"></div>
<div class="a" style="left:476.3px;top:807.7px;width:10.6px;height:1.3px;background:#8d92e8"></div>
<div class="t" style="left:494.6px;top:801.0px;font-size:10px;color:#3d3d44;letter-spacing:0.15px">Portal</div>
<div class="t" style="left:614.9px;top:801.0px;font-size:10px;color:#3d3d44;letter-spacing:0.27px">David Collins</div>
<div class="t" style="left:735.0px;top:801.0px;font-size:10px;color:#3d3d44;letter-spacing:0.215px">Software failure - Total Commander</div>
<div class="a" style="left:937.3px;top:795.6px;width:109.7px;height:20px;background:#c9c9c9;clip-path:polygon(5px 0,calc(100% - 5px) 0,100% 50%,calc(100% - 5px) 100%,5px 100%,0 50%)"></div>
<div class="t" style="left:937.3px;top:800.4px;width:109.7px;text-align:center;font-size:10px;letter-spacing:-0.3px;font-weight:bold;color:#2e2e2e">On hold</div>
<div class="a" style="left:1057.2px;top:795.6px;width:123.8px;height:20px;background:#c5d5c5;clip-path:polygon(5px 0,calc(100% - 5px) 0,100% 50%,calc(100% - 5px) 100%,5px 100%,0 50%)"></div>
<div class="t" style="left:1057.2px;top:800.4px;width:123.8px;text-align:center;font-size:10px;letter-spacing:-0.3px;font-weight:bold;color:#2e2e2e">Low</div>
<div class="t" style="left:1313.4px;top:801.0px;font-size:10px;color:#3d3d44;letter-spacing:0.27px">Charlotte White</div>
<div class="t" style="left:1433.3px;top:801.0px;font-size:10px;color:#3d3d44;letter-spacing:0.27px">Software failure</div>
<div class="a" style="left:1608.9px;top:796.4px;width:108.8px;height:20px;overflow:hidden"><div style="width:108.8px;height:20px;background:#e6e9ec;clip-path:polygon(5px 0,calc(100% - 5px) 0,100% 50%,calc(100% - 5px) 100%,5px 100%,0 50%)"></div></div>
<div class="a" style="left:1608.9px;top:796.4px;width:3px;height:20px;background:#0d1a9e;clip-path:polygon(100% 0,100% 100%,0 50%)"></div>
<div class="t" style="left:1616.9px;top:802.0px;font-size:10px;color:#303036;font-weight:bold;letter-spacing:-0.3px">5h 45m</div>
<div class="a" style="left:257.0px;top:856.0px;width:1571.0px;height:1.0px;background:#e5e5ec"></div>
<div class="a" style="left:262.2px;top:834.0px;width:10.8px;height:10.4px;background:#fff;border:1.3px solid #6a70d8;border-radius:2.5px"></div>
<svg class="a" style="left:297.0px;top:830.5px;" width="12" height="14" viewBox="0 0 12 14"><circle cx="6" cy="3.2" r="3.2" fill="#1b8a5e"/><path d="M0.2 13.5 C0.3 9.6 2.3 7.9 6 7.9 C9.7 7.9 11.7 9.6 11.8 13.5 Z" fill="#1b8a5e"/><path d="M5.3 8.3 H6.7 L7 13 H5 Z" fill="#f8f8fb" opacity="0.85"/><path d="M3.3 10.2 V13.2 M8.7 10.2 V13.2" stroke="#f8f8fb" stroke-width="0.6" opacity="0.8"/></svg>
<div class="t" style="left:353.3px;top:835.0px;font-size:10px;color:#3d3d44;letter-spacing:0.46px">Incident/23/2024/2/15</div>
<div class="a" style="left:474.3px;top:831.0px;width:14.6px;height:9.6px;background:#2d34d6;box-shadow:0 0 0 0.8px #a8acf0"></div>
<div class="a" style="left:476.3px;top:841.7px;width:10.6px;height:1.3px;background:#8d92e8"></div>
<div class="t" style="left:494.6px;top:835.0px;font-size:10px;color:#3d3d44;letter-spacing:0.15px">Portal</div>
<div class="t" style="left:614.9px;top:835.0px;font-size:10px;color:#3d3d44;letter-spacing:0.27px">David Collins</div>
<div class="t" style="left:735.0px;top:835.0px;font-size:10px;color:#3d3d44;letter-spacing:0.215px">Software failure - Total Commander</div>
<div class="a" style="left:937.3px;top:829.6px;width:109.7px;height:20px;background:#2c34d1;clip-path:polygon(5px 0,calc(100% - 5px) 0,100% 50%,calc(100% - 5px) 100%,5px 100%,0 50%)"></div>
<div class="t" style="left:937.3px;top:834.4px;width:109.7px;text-align:center;font-size:10px;letter-spacing:-0.3px;font-weight:bold;color:#fff">In progress</div>
<div class="a" style="left:1057.2px;top:829.6px;width:123.8px;height:20px;background:#03877a;clip-path:polygon(5px 0,calc(100% - 5px) 0,100% 50%,calc(100% - 5px) 100%,5px 100%,0 50%)"></div>
<div class="t" style="left:1057.2px;top:834.4px;width:123.8px;text-align:center;font-size:10px;letter-spacing:-0.3px;font-weight:bold;color:#fff">Medium</div>
<div class="t" style="left:1313.4px;top:835.0px;font-size:10px;color:#3d3d44;letter-spacing:0.27px">Charlotte White</div>
<div class="t" style="left:1433.3px;top:835.0px;font-size:10px;color:#3d3d44;letter-spacing:0.27px">Software failure</div>
<div class="a" style="left:1608.9px;top:830.4px;width:108.8px;height:20px;overflow:hidden"><div style="width:108.8px;height:20px;background:#e6e9ec;clip-path:polygon(5px 0,calc(100% - 5px) 0,100% 50%,calc(100% - 5px) 100%,5px 100%,0 50%)"></div></div>
<div class="a" style="left:1608.9px;top:830.4px;width:3px;height:20px;background:#0d1a9e;clip-path:polygon(100% 0,100% 100%,0 50%)"></div>
<div class="t" style="left:1616.9px;top:836.0px;font-size:10px;color:#303036;font-weight:bold;letter-spacing:-0.3px">5h 46m</div>
<div class="a" style="left:1728.9px;top:830.4px;width:101.1px;height:20px;overflow:hidden"><div style="width:108.8px;height:20px;background:linear-gradient(90deg,#d62b2e 0%,#a8141a 55%,#760608 100%);clip-path:polygon(5px 0,calc(100% - 5px) 0,100% 50%,calc(100% - 5px) 100%,5px 100%,0 50%)"></div></div>
<div class="t" style="left:1726.9px;top:835.2px;width:108.8px;text-align:center;font-size:10px;letter-spacing:-0.3px;font-weight:bold;color:#fff"><span style="display:inline-block;width:0;height:0;border-left:8.4px solid #fff;border-top:4.8px solid transparent;border-bottom:4.8px solid transparent;margin-right:5.6px;vertical-align:-1.2px"></span>27d 23h 26m</div>
<div class="a" style="left:257.0px;top:890.0px;width:1571.0px;height:1.0px;background:#e5e5ec"></div>
<div class="a" style="left:262.2px;top:868.0px;width:10.8px;height:10.4px;background:#fff;border:1.3px solid #6a70d8;border-radius:2.5px"></div>
<div class="t" style="left:353.3px;top:869.0px;font-size:10px;color:#3d3d44;letter-spacing:0.46px">Incident/22/2024/2/15</div>
<div class="a" style="left:474.3px;top:865.0px;width:14.6px;height:9.6px;background:#2d34d6;box-shadow:0 0 0 0.8px #a8acf0"></div>
<div class="a" style="left:476.3px;top:875.7px;width:10.6px;height:1.3px;background:#8d92e8"></div>
<div class="t" style="left:494.6px;top:869.0px;font-size:10px;color:#3d3d44;letter-spacing:0.15px">Portal</div>
<div class="t" style="left:614.9px;top:869.0px;font-size:10px;color:#3d3d44;letter-spacing:0.27px">David Collins</div>
<div class="t" style="left:735.0px;top:869.0px;font-size:10px;color:#3d3d44;letter-spacing:0.215px">Software failure - 7-zip</div>
<div class="a" style="left:937.3px;top:863.6px;width:109.7px;height:20px;background:#03877a;clip-path:polygon(5px 0,calc(100% - 5px) 0,100% 50%,calc(100% - 5px) 100%,5px 100%,0 50%)"></div>
<div class="t" style="left:937.3px;top:868.4px;width:109.7px;text-align:center;font-size:10px;letter-spacing:-0.3px;font-weight:bold;color:#fff">New</div>
<div class="a" style="left:1057.2px;top:863.6px;width:123.8px;height:20px;background:#fcbb57;clip-path:polygon(5px 0,calc(100% - 5px) 0,100% 50%,calc(100% - 5px) 100%,5px 100%,0 50%)"></div>
<div class="t" style="left:1057.2px;top:868.4px;width:123.8px;text-align:center;font-size:10px;letter-spacing:-0.3px;font-weight:bold;color:#2e2e2e">High</div>
<div class="t" style="left:1313.4px;top:869.0px;font-size:10px;color:#3d3d44;letter-spacing:0.27px">Charlotte White</div>
<div class="t" style="left:1433.3px;top:869.0px;font-size:10px;color:#3d3d44;letter-spacing:0.27px">Software failure</div>
<div class="a" style="left:1608.9px;top:864.4px;width:108.8px;height:20px;overflow:hidden"><div style="width:108.8px;height:20px;background:linear-gradient(90deg,#d62b2e 0%,#a8141a 55%,#760608 100%);clip-path:polygon(5px 0,calc(100% - 5px) 0,100% 50%,calc(100% - 5px) 100%,5px 100%,0 50%)"></div></div>
<div class="t" style="left:1606.9px;top:869.2px;width:108.8px;text-align:center;font-size:10px;letter-spacing:-0.3px;font-weight:bold;color:#fff"><span style="display:inline-block;width:0;height:0;border-left:8.4px solid #fff;border-top:4.8px solid transparent;border-bottom:4.8px solid transparent;margin-right:5.6px;vertical-align:-1.2px"></span>28d 5h 41m</div>
<div class="a" style="left:257.0px;top:933.0px;width:1571.0px;height:1.0px;background:#e5e5ec"></div>
<div class="a" style="left:262.2px;top:906.5px;width:10.8px;height:10.4px;background:#fff;border:1.3px solid #6a70d8;border-radius:2.5px"></div>
<svg class="a" style="left:297.0px;top:903.0px;" width="12" height="14" viewBox="0 0 12 14"><circle cx="6" cy="3.2" r="3.2" fill="#1b8a5e"/><path d="M0.2 13.5 C0.3 9.6 2.3 7.9 6 7.9 C9.7 7.9 11.7 9.6 11.8 13.5 Z" fill="#1b8a5e"/><path d="M5.3 8.3 H6.7 L7 13 H5 Z" fill="#f8f8fb" opacity="0.85"/><path d="M3.3 10.2 V13.2 M8.7 10.2 V13.2" stroke="#f8f8fb" stroke-width="0.6" opacity="0.8"/></svg>
<div class="t" style="left:353.3px;top:907.0px;font-size:10px;color:#3d3d44;letter-spacing:0.46px">Incident/21/2024/2/15</div>
<div class="a" style="left:474.3px;top:903.5px;width:14.6px;height:9.6px;background:#2d34d6;box-shadow:0 0 0 0.8px #a8acf0"></div>
<div class="a" style="left:476.3px;top:914.2px;width:10.6px;height:1.3px;background:#8d92e8"></div>
<div class="t" style="left:494.6px;top:907.0px;font-size:10px;color:#3d3d44;letter-spacing:0.15px">Portal</div>
<div class="t" style="left:614.9px;top:907.0px;font-size:10px;color:#3d3d44;letter-spacing:0.27px">David Collins</div>
<div class="t" style="left:735.0px;top:907.0px;font-size:10px;color:#3d3d44;letter-spacing:0.215px">Hardware failure - Laptop</div>
<div class="a" style="left:937.3px;top:902.1px;width:109.7px;height:20px;background:#03877a;clip-path:polygon(5px 0,calc(100% - 5px) 0,100% 50%,calc(100% - 5px) 100%,5px 100%,0 50%)"></div>
<div class="t" style="left:937.3px;top:906.9px;width:109.7px;text-align:center;font-size:10px;letter-spacing:-0.3px;font-weight:bold;color:#fff">New</div>
<div class="a" style="left:1057.2px;top:902.1px;width:123.8px;height:20px;background:#c5d5c5;clip-path:polygon(5px 0,calc(100% - 5px) 0,100% 50%,calc(100% - 5px) 100%,5px 100%,0 50%)"></div>
<div class="t" style="left:1057.2px;top:906.9px;width:123.8px;text-align:center;font-size:10px;letter-spacing:-0.3px;font-weight:bold;color:#2e2e2e">Low</div>
<div class="t" style="left:1192.0px;top:899.0px;font-size:10px;color:#3d3d44;letter-spacing:0.33px">Hardware support</div>
<div class="t" style="left:1192.0px;top:915.0px;font-size:10px;color:#3d3d44;letter-spacing:0.33px">group</div>
<div class="t" style="left:1433.3px;top:907.0px;font-size:10px;color:#3d3d44;letter-spacing:0.27px">Workstation failure</div>
<div class="a" style="left:1608.9px;top:902.9px;width:108.8px;height:20px;overflow:hidden"><div style="width:108.8px;height:20px;background:linear-gradient(90deg,#d62b2e 0%,#a8141a 55%,#760608 100%);clip-path:polygon(5px 0,calc(100% - 5px) 0,100% 50%,calc(100% - 5px) 100%,5px 100%,0 50%)"></div></div>
<div class="t" style="left:1606.9px;top:907.7px;width:108.8px;text-align:center;font-size:10px;letter-spacing:-0.3px;font-weight:bold;color:#fff"><span style="display:inline-block;width:0;height:0;border-left:8.4px solid #fff;border-top:4.8px solid transparent;border-bottom:4.8px solid transparent;margin-right:5.6px;vertical-align:-1.2px"></span>28d 7h 41m</div>
<div class="a" style="left:1728.9px;top:902.9px;width:101.1px;height:20px;overflow:hidden"><div style="width:108.8px;height:20px;background:linear-gradient(90deg,#d62b2e 0%,#a8141a 55%,#760608 100%);clip-path:polygon(5px 0,calc(100% - 5px) 0,100% 50%,calc(100% - 5px) 100%,5px 100%,0 50%)"></div></div>
<div class="t" style="left:1726.9px;top:907.7px;width:108.8px;text-align:center;font-size:10px;letter-spacing:-0.3px;font-weight:bold;color:#fff"><span style="display:inline-block;width:0;height:0;border-left:8.4px solid #fff;border-top:4.8px solid transparent;border-bottom:4.8px solid transparent;margin-right:5.6px;vertical-align:-1.2px"></span>28d 3h 25m</div>
<div class="a" style="left:257.0px;top:976.0px;width:1571.0px;height:1.0px;background:#e5e5ec"></div>
<div class="a" style="left:262.2px;top:949.5px;width:10.8px;height:10.4px;background:#fff;border:1.3px solid #6a70d8;border-radius:2.5px"></div>
<div class="t" style="left:353.3px;top:950.0px;font-size:10px;color:#3d3d44;letter-spacing:0.46px">Incident/20/2024/2/15</div>
<div class="a" style="left:474.3px;top:946.5px;width:14.6px;height:9.6px;background:#2d34d6;box-shadow:0 0 0 0.8px #a8acf0"></div>
<div class="a" style="left:476.3px;top:957.2px;width:10.6px;height:1.3px;background:#8d92e8"></div>
<div class="t" style="left:494.6px;top:950.0px;font-size:10px;color:#3d3d44;letter-spacing:0.15px">Portal</div>
<div class="t" style="left:614.9px;top:950.0px;font-size:10px;color:#3d3d44;letter-spacing:0.27px">David Collins</div>
<div class="t" style="left:735.0px;top:950.0px;font-size:10px;color:#3d3d44;letter-spacing:0.215px">Unable to Print in Color</div>
<div class="a" style="left:937.3px;top:945.1px;width:109.7px;height:20px;background:#03877a;clip-path:polygon(5px 0,calc(100% - 5px) 0,100% 50%,calc(100% - 5px) 100%,5px 100%,0 50%)"></div>
<div class="t" style="left:937.3px;top:949.9px;width:109.7px;text-align:center;font-size:10px;letter-spacing:-0.3px;font-weight:bold;color:#fff">New</div>
<div class="a" style="left:1057.2px;top:945.1px;width:123.8px;height:20px;background:#fcbb57;clip-path:polygon(5px 0,calc(100% - 5px) 0,100% 50%,calc(100% - 5px) 100%,5px 100%,0 50%)"></div>
<div class="t" style="left:1057.2px;top:949.9px;width:123.8px;text-align:center;font-size:10px;letter-spacing:-0.3px;font-weight:bold;color:#2e2e2e">High</div>
<div class="t" style="left:1192.0px;top:942.0px;font-size:10px;color:#3d3d44;letter-spacing:0.33px">Hardware support</div>
<div class="t" style="left:1192.0px;top:958.0px;font-size:10px;color:#3d3d44;letter-spacing:0.33px">group</div>
<div class="t" style="left:1433.3px;top:950.0px;font-size:10px;color:#3d3d44;letter-spacing:0.27px">Printer failure</div>
<div class="a" style="left:1608.9px;top:945.9px;width:108.8px;height:20px;overflow:hidden"><div style="width:108.8px;height:20px;background:linear-gradient(90deg,#d62b2e 0%,#a8141a 55%,#760608 100%);clip-path:polygon(5px 0,calc(100% - 5px) 0,100% 50%,calc(100% - 5px) 100%,5px 100%,0 50%)"></div></div>
<div class="t" style="left:1606.9px;top:950.7px;width:108.8px;text-align:center;font-size:10px;letter-spacing:-0.3px;font-weight:bold;color:#fff"><span style="display:inline-block;width:0;height:0;border-left:8.4px solid #fff;border-top:4.8px solid transparent;border-bottom:4.8px solid transparent;margin-right:5.6px;vertical-align:-1.2px"></span>28d 7h 42m</div>
<div class="a" style="left:1829.5px;top:309.0px;width:10.5px;height:660.0px;background:#e6eafc"></div>
<div class="a" style="left:1831.5px;top:325.0px;width:6.0px;height:293.0px;background:#b9bdd0;border-radius:3px"></div>
<svg class="a" style="left:1830.5px;top:314.0px;" width="8" height="5" viewBox="0 0 8 5"><path d="M1 4 L4 1 L7 4 Z" fill="#c4c7d6"/></svg>
<svg class="a" style="left:1830.5px;top:951.0px;" width="8" height="5" viewBox="0 0 8 5"><path d="M1 1 L4 4 L7 1 Z" fill="#c4c7d6"/></svg>
<div class="a" style="left:257.0px;top:961.6px;width:1583.0px;height:6.0px;background:#e6eafc"></div>
<div class="a" style="left:272.0px;top:963.6px;width:1265.0px;height:4.0px;background:#b0b3c0;border-radius:2px"></div>
<div class="a" style="left:1857.0px;top:0.0px;width:15.0px;height:966.0px;background:#fafafa"></div>
<div class="a" style="left:1860.0px;top:23.0px;width:9.0px;height:874.0px;background:#8c8c8c;border-radius:4.5px"></div>
<svg class="a" style="left:1859.5px;top:9.5px;" width="10" height="6" viewBox="0 0 10 6"><path d="M0.5 5.5 L5 0.5 L9.5 5.5 Z" fill="#8a8a8a"/></svg>
<svg class="a" style="left:1859.5px;top:950.5px;" width="10" height="6" viewBox="0 0 10 6"><path d="M0.5 0.5 L5 5.5 L9.5 0.5 Z" fill="#8a8a8a"/></svg>
<div class="a" style="left:255.5px;top:338.4px;width:1577.5px;height:53.0px;border:4.3px solid #93d53f;border-radius:9px;box-shadow:inset 0 1px 6px 2px rgba(60,60,110,0.3),0 0 4px 0.5px rgba(0,0,0,0.28)"></div>
<div class="a" style="left:555.3px;top:115.0px;width:172.1px;height:20.2px;background:#e8eaee;border:1.5px solid #c7c9cc;border-radius:3px;box-shadow:0 1px 3px rgba(0,0,0,0.25)"></div>
<div class="t" style="left:566.0px;top:121.0px;font-size:10.4px;color:#2a2a2a;">new rule for testing incident</div>
<svg class="a" style="left:490.0px;top:125.0px;" width="100" height="100" viewBox="0 0 100 100"><defs><filter id="sh" x="-30%" y="-30%" width="160%" height="160%"><feDropShadow dx="2" dy="2" stdDeviation="2" flood-color="#000" flood-opacity="0.35"/></filter></defs><path d="M14 93.7 L68.8 23.3 L63.1 21.5 L89.2 9.8 L80.5 36.7 L78.2 32 L15.5 94.5 Z" fill="#92d43f" filter="url(#sh)"/></svg>
<div class="a" style="left:0.0px;top:0.0px;width:8.0px;height:8.0px;background:radial-gradient(circle at 8px 8px,transparent 7px,#333 8.2px)"></div>
<div class="a" style="left:1864.0px;top:0.0px;width:8.0px;height:8.0px;background:radial-gradient(circle at 0 8px,transparent 7px,#333 8.2px)"></div>
<div class="a" style="left:0.0px;top:958.0px;width:8.0px;height:8.0px;background:radial-gradient(circle at 8px 0,transparent 7px,#333 8.2px)"></div>
<div class="a" style="left:1864.0px;top:958.0px;width:8.0px;height:8.0px;background:radial-gradient(circle at 0 0,transparent 7px,#333 8.2px)"></div></body></html>
